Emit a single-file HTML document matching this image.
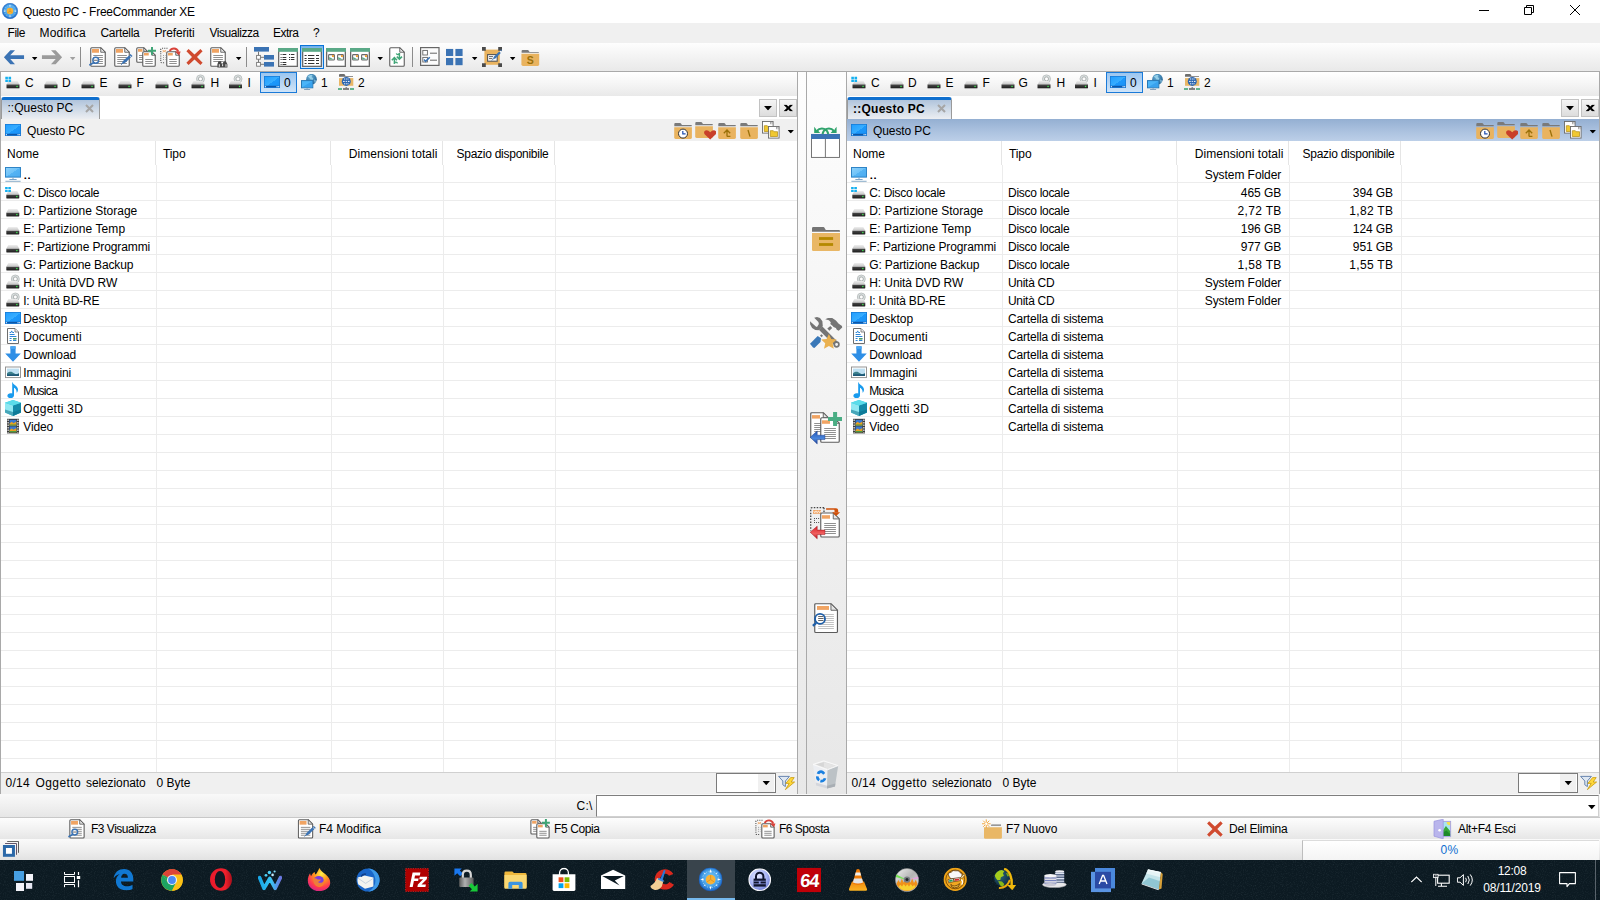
<!DOCTYPE html>
<html><head><meta charset="utf-8"><title>Questo PC - FreeCommander XE</title>
<style>
html,body{margin:0;padding:0;background:#f0f0f0;overflow:hidden;}
body{width:1600px;height:900px;position:relative;overflow:hidden;font-family:"Liberation Sans",sans-serif;font-size:12px;color:#000}
div,span.t,span.b,svg.a{position:absolute;}
span.t,span.b{white-space:pre;}
span.b{font-weight:bold}
</style></head>
<body>
<svg width="0" height="0" style="position:absolute"><defs>
<linearGradient id="gdt" x1="0" y1="0" x2="0" y2="1"><stop offset="0" stop-color="#eeeeee"/><stop offset="1" stop-color="#c2c2c2"/></linearGradient><linearGradient id="gdb" x1="0" y1="0" x2="0" y2="1"><stop offset="0" stop-color="#4a4a4a"/><stop offset="1" stop-color="#1c1c1c"/></linearGradient>
<symbol id="i-back" viewBox="0 0 21 15"><path d="M6.9 0.2L0.4 7.2 6.9 14.2H11.5L6.76 9.1H20.6V5.3H6.76L11.5 0.2z" fill="#3b73b4"/></symbol>
<symbol id="i-fwd" viewBox="0 0 21 15"><path d="M14.1 0.2L20.6 7.2 14.1 14.2H9.5L14.24 9.1H0.4V5.3H14.24L9.5 0.2z" fill="#9b9b9b"/></symbol>
<symbol id="i-dd" viewBox="0 0 7 4"><path d="M0 0h7L3.5 4z" fill="#000"/></symbol>
<symbol id="i-ddg" viewBox="0 0 7 4"><path d="M0 0h7L3.5 4z" fill="#a0a0a0"/></symbol>
<symbol id="i-tview" viewBox="0 0 18 21"><path d="M3.75 0.75H12.75L17.25 5.25V18.25Q17.25 19.25 16.25 19.25H3.75Q2.75 19.25 2.75 18.25V1.75Q2.75 0.75 3.75 0.75z" fill="#fff" stroke="#5c5c5c" stroke-width="1.1" stroke-linejoin="round"/><path d="M12.75 0.75V5.25H17.25z" fill="#e4e4e4" stroke="#5c5c5c" stroke-width="0.88" stroke-linejoin="round"/><rect x="4" y="2" width="7.0" height="3.75" fill="#f0a463"/><path d="M5.25 8.5H14.9" stroke="#747474" stroke-width="0.8"/><path d="M5.25 10.5H14.9" stroke="#747474" stroke-width="0.8"/><path d="M5.25 12.5H14.9" stroke="#747474" stroke-width="0.8"/><path d="M5.25 14.5H14.9" stroke="#747474" stroke-width="0.8"/><path d="M5.25 16.5H14.9" stroke="#747474" stroke-width="0.8"/><circle cx="7.75" cy="13.25" r="2.9" fill="#fff" stroke="#3b73b4" stroke-width="1.5"/><path d="M5.5 15.7L1.9 17.8" stroke="#3b73b4" stroke-width="1.7" stroke-linecap="round"/><path d="M5.7 13.25h4.100" stroke="#5a5a5a" stroke-width="0.9"/></symbol>
<symbol id="i-tedit" viewBox="0 0 19 21"><path d="M1.75 0.75H10.75L15.25 5.25V18.25Q15.25 19.25 14.25 19.25H1.75Q0.75 19.25 0.75 18.25V1.75Q0.75 0.75 1.75 0.75z" fill="#fff" stroke="#5c5c5c" stroke-width="1.1" stroke-linejoin="round"/><path d="M10.75 0.75V5.25H15.25z" fill="#e4e4e4" stroke="#5c5c5c" stroke-width="0.88" stroke-linejoin="round"/><rect x="2" y="2" width="7.0" height="3.75" fill="#f0a463"/><path d="M3.25 8.5H12.9" stroke="#747474" stroke-width="0.8"/><path d="M3.25 10.5H12.9" stroke="#747474" stroke-width="0.8"/><path d="M3.25 12.5H12.9" stroke="#747474" stroke-width="0.8"/><path d="M3.25 14.5H12.9" stroke="#747474" stroke-width="0.8"/><path d="M3.25 16.5H12.9" stroke="#747474" stroke-width="0.8"/><path d="M7.600 16.900l1.400-2.800 6-5.600 1.900 2-6 5.600z" fill="#3b73b4"/><path d="M7 17.700l1.300-1.200" stroke="#3b73b4" stroke-width="1"/><path d="M15.400 7.900l1.100-0.900 2 2.100-1.100 0.900z" fill="#3b73b4"/></symbol>
<symbol id="i-tcopy" viewBox="0 0 21 21"><path d="M1.75 0.75H7.75L11.25 4.25V14.25Q11.25 15.25 10.25 15.25H1.75Q0.75 15.25 0.75 14.25V1.75Q0.75 0.75 1.75 0.75z" fill="#fff" stroke="#5c5c5c" stroke-width="1.1" stroke-linejoin="round"/><path d="M7.75 0.75V4.25H11.25z" fill="#e4e4e4" stroke="#5c5c5c" stroke-width="0.88" stroke-linejoin="round"/><rect x="2" y="2" width="4.5" height="2.75" fill="#f0a463"/><path d="M3 8.5H9" stroke="#747474" stroke-width="0.8"/><path d="M3 10.5H9" stroke="#747474" stroke-width="0.8"/><path d="M3 12.5H9" stroke="#747474" stroke-width="0.8"/><path d="M7.75 4.75H15.75L19.25 8.25V18.25Q19.25 19.25 18.25 19.25H7.75Q6.75 19.25 6.75 18.25V5.75Q6.75 4.75 7.75 4.75z" fill="#fff" stroke="#5c5c5c" stroke-width="1.1" stroke-linejoin="round"/><path d="M15.75 4.75V8.25H19.25z" fill="#e4e4e4" stroke="#5c5c5c" stroke-width="0.88" stroke-linejoin="round"/><rect x="8" y="6" width="4.75" height="2.5" fill="#f0a463"/><path d="M9.25 12.5H16.75" stroke="#747474" stroke-width="0.8"/><path d="M9.25 14.5H16.75" stroke="#747474" stroke-width="0.8"/><path d="M9.25 16.5H16.75" stroke="#747474" stroke-width="0.8"/><path d="M16 0v7.750M12 3.750h8" stroke="#3fa576" stroke-width="2"/></symbol>
<symbol id="i-tmove" viewBox="0 0 21 21"><path d="M7.500 1.250H2q-1.250 0-1.250 1.250V14.500q0 1.250 1.250 1.250H5" fill="none" stroke="#555" stroke-width="1.100" stroke-dasharray="1.100 1.100"/><path d="M2.500 3.200l3.600 2M2.500 5.200l3.600-2" stroke="#f0a463" stroke-width="0.800"/><path d="M3 8.500h2.500M3 10.500h2.500M3 12.500h2.500" stroke="#888" stroke-width="0.800" stroke-dasharray="1 1"/><path d="M7.75 4.75H15.75L19.25 8.25V18.25Q19.25 19.25 18.25 19.25H7.75Q6.75 19.25 6.75 18.25V5.75Q6.75 4.75 7.75 4.75z" fill="#fff" stroke="#5c5c5c" stroke-width="1.1" stroke-linejoin="round"/><path d="M15.75 4.75V8.25H19.25z" fill="#e4e4e4" stroke="#5c5c5c" stroke-width="0.88" stroke-linejoin="round"/><rect x="8" y="6" width="4.75" height="2.5" fill="#f0a463"/><path d="M9.25 12.5H16.75" stroke="#747474" stroke-width="0.8"/><path d="M9.25 14.5H16.75" stroke="#747474" stroke-width="0.8"/><path d="M9.25 16.5H16.75" stroke="#747474" stroke-width="0.8"/><path d="M9.600 4C11.600 0.600 16.600 0.400 18.400 4.600" fill="none" stroke="#d9433b" stroke-width="1.900"/><path d="M15 4.600h5.600l-1.300 3.800z" fill="#d9433b"/></symbol>
<symbol id="i-tdel" viewBox="0 0 17 17"><path d="M2.6 0.4L8.5 5.9 14.4 0.4 16.6 2.8 11 8.5l5.6 5.7-2.2 2.4L8.5 11 2.6 16.6 0.4 14.2 6 8.5 0.4 2.8z" fill="#d04a2f"/></symbol>
<symbol id="i-tsearch" viewBox="0 0 19 21"><path d="M1.75 0.75H10.75L15.25 5.25V18.25Q15.25 19.25 14.25 19.25H1.75Q0.75 19.25 0.75 18.25V1.75Q0.75 0.75 1.75 0.75z" fill="#fff" stroke="#5c5c5c" stroke-width="1.1" stroke-linejoin="round"/><path d="M10.75 0.75V5.25H15.25z" fill="#e4e4e4" stroke="#5c5c5c" stroke-width="0.88" stroke-linejoin="round"/><rect x="2" y="2" width="7.0" height="3.75" fill="#f0a463"/><path d="M3.25 8.5H12.9" stroke="#747474" stroke-width="0.8"/><path d="M3.25 10.5H12.9" stroke="#747474" stroke-width="0.8"/><path d="M3.25 12.5H12.9" stroke="#747474" stroke-width="0.8"/><path d="M3.25 14.5H12.9" stroke="#747474" stroke-width="0.8"/><path d="M7.400 20.600v-3.400l1.100-3h2.500l0.500 2.200h1.400l0.500-2.200h2.500l1.500 3v3.400z" fill="#474747"/><path d="M9.300 17.200v2.600M16 17.200v2.600M12.600 17.200v2" stroke="#fff" stroke-width="0.900"/></symbol>
<symbol id="i-ttree" viewBox="0 0 20 20"><rect x="0" y="0" width="15" height="4.6" fill="#3b73b4"/><rect x="10" y="8" width="10" height="4.6" fill="#3b73b4"/><rect x="10" y="15" width="10" height="4.6" fill="#3b73b4"/><path d="M4.5 4.6V17.3M4.5 10.3H10M4.5 17.3H10" stroke="#777" stroke-width="1" fill="none"/><rect x="2.6" y="8.4" width="3.8" height="3.8" fill="#fff" stroke="#777" stroke-width="0.9"/><rect x="2.6" y="15.4" width="3.8" height="3.8" fill="#fff" stroke="#777" stroke-width="0.9"/></symbol>
<symbol id="i-tlist" viewBox="0 0 20 19"><rect x="0.65" y="0.65" width="18.7" height="17.7" fill="#fff" stroke="#6a6a6a" stroke-width="1.3"/><rect x="0" y="0" width="20" height="3.8" fill="#5aa987"/><path d="M4.5 6.5h3.8M4.5 9.5h3.8M4.5 11.5h3.8M4.5 14.5h3.8M4.5 16.5h3.8M12.8 6.5h3.6M12.8 9.5h3.6M12.8 11.5h3.6" stroke="#333" stroke-width="1"/><path d="M2.6 6.5h1M2.6 9.5h1M2.6 11.5h1M2.6 14.5h1M2.6 16.5h1M11 6.5h1M11 9.5h1M11 11.5h1" stroke="#333" stroke-width="1"/></symbol>
<symbol id="i-tdetail" viewBox="0 0 20 19"><rect x="0.65" y="0.65" width="18.7" height="17.7" fill="#fff" stroke="#6a6a6a" stroke-width="1.3"/><rect x="0" y="0" width="20" height="3.8" fill="#5aa987"/><path d="M2.6 7.5h2M6 7.5h6.4M14 7.5h3M2.6 10.5h2M6 10.5h6.4M14 10.5h3M2.6 12.5h2M6 12.5h6.4M14 12.5h3M2.6 15.5h2M6 15.5h6.4M14 15.5h3" stroke="#333" stroke-width="1"/></symbol>
<symbol id="i-tthumb" viewBox="0 0 20 19"><rect x="0.65" y="0.65" width="18.7" height="17.7" fill="#fff" stroke="#6a6a6a" stroke-width="1.3"/><rect x="0" y="0" width="20" height="3.8" fill="#5aa987"/><rect x="2.6" y="6.6" width="5.8" height="5.4" rx="0.8" fill="#fff" stroke="#6a6a6a" stroke-width="1.1"/><path d="M3.2 9l4.6 2.4h-4.6z" fill="#5aa987"/><rect x="6.0" y="7.1" width="1.9" height="1.9" fill="#f0a030"/><rect x="11.6" y="6.6" width="5.8" height="5.4" rx="0.8" fill="#fff" stroke="#6a6a6a" stroke-width="1.1"/><path d="M12.2 9l4.6 2.4h-4.6z" fill="#5aa987"/><rect x="15.0" y="7.1" width="1.9" height="1.9" fill="#f0a030"/></symbol>
<symbol id="i-trefresh" viewBox="0 0 17 21"><path d="M1.75 0.75H10.75L15.25 5.25V18.25Q15.25 19.25 14.25 19.25H1.75Q0.75 19.25 0.75 18.25V1.75Q0.75 0.75 1.75 0.75z" fill="#fff" stroke="#5c5c5c" stroke-width="1.1" stroke-linejoin="round"/><path d="M10.75 0.75V5.25H15.25z" fill="#e4e4e4" stroke="#5c5c5c" stroke-width="0.88" stroke-linejoin="round"/><path d="M5.400 16.800v-5.600M2.800 13.200l2.600-2.600 2.600 2.600" fill="none" stroke="#3fa576" stroke-width="1.500"/><path d="M5.400 16.800c0-2 2.600-2.200 3-0.400" fill="none" stroke="#3fa576" stroke-width="1.400"/><path d="M10.400 6v5.600M7.800 9.600l2.600 2.600 2.600-2.600" fill="none" stroke="#3fa576" stroke-width="1.500"/><path d="M10.400 6c0 2-2.600 2.200-3 0.400" fill="none" stroke="#3fa576" stroke-width="1.400"/></symbol>
<symbol id="i-tcheck" viewBox="0 0 20 19"><rect x="0.6" y="0.6" width="18.4" height="17.8" fill="#fcfcfc" stroke="#666" stroke-width="1.2"/><rect x="2.8" y="3.4" width="4.6" height="4.6" fill="#fff" stroke="#666" stroke-width="0.9"/><rect x="2.8" y="10.4" width="4.6" height="4.6" fill="#fff" stroke="#666" stroke-width="0.9"/><path d="M10 6.2h7M10 13.2h7" stroke="#666" stroke-width="1"/><path d="M4 12.6l1.6 1.8 4.2-4.2" fill="none" stroke="#3b73b4" stroke-width="1.5"/></symbol>
<symbol id="i-tgrid" viewBox="0 0 17 17"><path d="M0 0h7.2v7.2H0zM9.4 0h7.2v7.2H9.4zM0 9.4h7.2v7.2H0zM9.4 9.4h7.2v7.2H9.4z" fill="#3b73b4"/></symbol>
<symbol id="i-tselect" viewBox="0 0 21 21"><rect x="2.4" y="2.6" width="15.4" height="15.2" fill="#e9b35f"/><path d="M0 0h3.8v3.8H0zM16.2 0h3.8v3.8h-3.8zM0 16.2h3.8v3.8H0zM16.2 16.2h3.8v3.8h-3.8z" fill="#4a4a4a"/><rect x="5.6" y="7.6" width="9.6" height="6.6" fill="#fff" stroke="#555" stroke-width="1.1"/><path d="M7 9.6h4M7 11.6h3.4" stroke="#555" stroke-width="0.9"/><path d="M11 12.2l0.8-2.4 5.4-5.4 1.6 1.6-5.4 5.4z" fill="#3b73b4"/><path d="M18 3l1.8-0.4-0.4 1.8z" fill="#3b73b4"/><path d="M9.8 13.4l1.2-1.2" stroke="#3b73b4" stroke-width="1"/></symbol>
<symbol id="i-tsfolder" viewBox="0 0 19 17"><path d="M0.6 2.6V1.4Q0.6 0.4 1.6 0.4H6.6Q7.4 0.4 7.8 1.2L8.6 2.4H17.8V3.2H0.6z" fill="#7a7a7a"/><path d="M0.4 4.2H18.2V14.8Q18.2 16.4 16.6 16.4H2Q0.4 16.4 0.4 14.8z" fill="#e9b35f"/><text x="9.3" y="14.2" font-family="Liberation Sans" font-size="10.5" font-weight="bold" fill="#9a7008" text-anchor="middle">S</text></symbol>
<symbol id="i-drv" viewBox="0 0 16 17"><path d="M4 8.6h9l2 3.700H2z" fill="url(#gdt)"/><path d="M2 12.2h13v3.100a0.600 0.600 0 0 1-0.600 0.600H2.600a0.600 0.600 0 0 1-0.600-0.600z" fill="url(#gdb)"/><rect x="11.900" y="13.399999999999999" width="1.300" height="1.300" fill="#3cf050"/><path d="M2.200 16.2h12.600" stroke="#9a9a9a" stroke-width="0.600" stroke-opacity=".6"/></symbol>
<symbol id="i-drvc" viewBox="0 0 16 17"><path d="M4 8.6h9l2 3.700H2z" fill="url(#gdt)"/><path d="M2 12.2h13v3.100a0.600 0.600 0 0 1-0.600 0.600H2.600a0.600 0.600 0 0 1-0.600-0.600z" fill="url(#gdb)"/><rect x="11.900" y="13.399999999999999" width="1.300" height="1.300" fill="#3cf050"/><path d="M2.200 16.2h12.600" stroke="#9a9a9a" stroke-width="0.600" stroke-opacity=".6"/><path d="M0.800 4.400h2.600v2.400H0.800zM4 4.400H6.600v2.400H4zM0.800 7.400h2.600v2.200H0.800zM4 7.400H6.600v2.200H4z" fill="#14b0f0"/></symbol>
<symbol id="i-drvcd" viewBox="0 0 16 17"><circle cx="11" cy="6.500" r="4" fill="#dde4e4" stroke="#b4b8b8" stroke-width="0.800"/><circle cx="11" cy="6.500" r="2.100" fill="#f4f4f4" stroke="#a4a8a8" stroke-width="0.900"/><circle cx="11" cy="6.500" r="1" fill="#fff"/><path d="M4 8.6h9l2 3.700H2z" fill="url(#gdt)"/><path d="M2 12.2h13v3.100a0.600 0.600 0 0 1-0.600 0.600H2.600a0.600 0.600 0 0 1-0.600-0.600z" fill="url(#gdb)"/><rect x="11.900" y="13.399999999999999" width="1.300" height="1.300" fill="#3cf050"/><path d="M2.200 16.2h12.600" stroke="#9a9a9a" stroke-width="0.600" stroke-opacity=".6"/></symbol>
<symbol id="i-desk" viewBox="0 0 16 12"><defs><linearGradient id="gds" x1="0" y1="0" x2="1" y2="1"><stop offset="0" stop-color="#1f9cff"/><stop offset=".52" stop-color="#38aeff"/><stop offset=".52" stop-color="#1c98fb"/><stop offset="1" stop-color="#1a90f4"/></linearGradient></defs><rect width="16" height="11.800" fill="url(#gds)"/><path d="M0 0.400h16M0.400 0v11.800M15.600 0v11.800" stroke="#1678d2" stroke-width="0.800"/><rect x="0" y="9.600" width="16" height="2.200" fill="#1470cc"/><path d="M2.200 10.700h9.800" stroke="#0c4f9c" stroke-width="0.900"/><path d="M0.900 10.700h1M12.600 10.700h1M14.200 10.700h1" stroke="#fff" stroke-width="1"/></symbol>
<symbol id="i-pc" viewBox="0 0 16 15"><defs><linearGradient id="gpc" x1="0" y1="0" x2="1" y2="1"><stop offset="0" stop-color="#8fd2fb"/><stop offset=".5" stop-color="#6ec2f8"/><stop offset=".5" stop-color="#55b4f4"/><stop offset="1" stop-color="#4aaaf0"/></linearGradient></defs><rect x="0.500" y="0.500" width="15" height="9.600" fill="url(#gpc)" stroke="#2f84c6" stroke-width="1"/><path d="M8 10.600v1.600M4.400 12.500h7.200" stroke="#7ba4c8" stroke-width="1"/><path d="M0.400 14.300h15.200" stroke="#8fb0cc" stroke-width="1.100"/></symbol>
<symbol id="i-docs" viewBox="0 0 16 16"><path d="M2.500 0.500h7.500l3.500 3.500v11.500H2.500z" fill="#fff" stroke="#6e6e6e" stroke-width="1"/><path d="M10 0.700v3.300h3.300" fill="#eee" stroke="#6e6e6e" stroke-width="0.800"/><path d="M4.600 4.500h1.400l0.700-1.600 0.700 1.600h1.600M4.600 6.500h5M4.600 8.500h6.800M4.600 10.500h2M8 10.500h3.400M4.600 12.500h2M8 12.500h3.400" fill="none" stroke="#2f86d6" stroke-width="1"/><path d="M8 10h3.400v1.600H8z" fill="#4a9a6a"/></symbol>
<symbol id="i-down" viewBox="0 0 16 16"><path d="M5.400 0.300h5.200v7.300h5.200L8 15.800 0.200 7.600h5.200z" fill="#2f8fe6"/><path d="M5.400 0.300h5.200v2.600H5.400z" fill="#4aa6f2"/></symbol>
<symbol id="i-pics" viewBox="0 0 16 16"><rect x="0.5" y="3" width="15" height="10.6" fill="#fff" stroke="#8c8c8c" stroke-width="0.9"/><rect x="2" y="4.6" width="12" height="7.4" fill="#bfe0f2"/><path d="M2 9.2c3-2.4 5-1.6 7 0s3.4 1 5-0.2V12H2z" fill="#3c7f8c"/><path d="M2 10.6c4-1 8 0.2 12-0.6V12H2z" fill="#1e5a78"/></symbol>
<symbol id="i-music" viewBox="0 0 16 16"><path d="M7.600 0.200c0.400 2.600 5.400 3.400 5.400 7.400 0 1.400-0.600 2.600-1.400 3.400 0.400-3-1.400-4.800-2.600-5.200v7.400c0 1.800-1.800 3-3.600 3s-3-1-3-2.400 1.400-2.600 3.200-2.600c0.800 0 1.200 0.100 1.600 0.400V0.200z" fill="#199bee"/></symbol>
<symbol id="i-obj3d" viewBox="0 0 16 16"><path d="M8 0l8 2.800v9.800l-8 3.400-8-3.400V2.800z" fill="#35c8dc"/><path d="M0 2.800l8 2.800v10.400L0 12.600z" fill="#8fe8f2"/><path d="M8 5.600l8-2.800v9.800l-8 3.400z" fill="#138aa8"/><path d="M0 2.800L8 0l8 2.800-8 2.800z" fill="#5adcea"/><path d="M0 9.400l8 2.600 8-2.600v3.200l-8 3.400-8-3.400z" fill="#0c6f8a" fill-opacity=".55"/></symbol>
<symbol id="i-video" viewBox="0 0 16 16"><rect x="2" y="0.8" width="12" height="14.6" fill="#3a3a3a"/><path d="M3.1 1.6v13.2M12.9 1.6v13.2" stroke="#fff" stroke-width="1.1" stroke-dasharray="1.3 1.2"/><rect x="4.6" y="1.8" width="6.8" height="5.8" fill="#3a78d0"/><rect x="4.6" y="8.4" width="6.8" height="5.8" fill="#3a78d0"/><path d="M4.6 5.4l2-1.6 2 1.400 2.800-1.800v4.200H4.600zM4.600 12l2-1.600 2 1.400 2.800-1.800v4.200H4.600z" fill="#e8a020"/><path d="M4.600 6.400h6.800v1.200H4.600zM4.600 13h6.800v1.200H4.600z" fill="#4a9a40"/></symbol>
<symbol id="i-net1" viewBox="0 0 17 16"><defs><radialGradient id="gn1" cx=".4" cy=".3" r=".75"><stop offset="0" stop-color="#6ab4dc"/><stop offset="1" stop-color="#1c5a8c"/></radialGradient></defs><circle cx="11" cy="5.200" r="5.300" fill="url(#gn1)"/><path d="M7.200 2.600c1.600-1.400 3.400-1.800 4.800-1.400l-1 1.800 1.800 1.200-0.400 1.600-2.400-0.400-1.200-1.600z" fill="#a8dcf0" fill-opacity=".75"/><path d="M13.400 5.600l1.800 0.400 0.400 2-1.400 1.600z" fill="#a8dcf0" fill-opacity=".6"/><rect x="1" y="6.600" width="11.300" height="7.200" fill="#4ab4f8" stroke="#2878b4" stroke-width="1"/><path d="M1.600 13.200L11.700 7.200v6z" fill="#38a2ee"/><path d="M6.600 14.200v1M3.600 15.500h6" stroke="#7a9ab8" stroke-width="0.900"/></symbol>
<symbol id="i-net2" viewBox="0 0 17 16"><path d="M1.500 2V1Q1.500 0 2.500 0H6.500Q7 0 7.300 0.500L8 2H15.500V2.700H1.500z" fill="#6e6e6e"/><rect x="1.500" y="4.100" width="14.300" height="7.700" fill="#e9b766"/><circle cx="8.800" cy="7.400" r="4.500" fill="#2c66b0"/><path d="M6.600 5h1M8.300 5h1M10 5h1M5.600 7.400h1.600M8.200 7.400h1.200M10.400 7.400h1.600M6.600 9.800h1M8.300 9.800h1M10 9.800h1" stroke="#fff" stroke-width="1"/><rect x="0.500" y="14.200" width="4" height="1.600" fill="#3fa576"/><rect x="12.500" y="14.200" width="4" height="1.600" fill="#3fa576"/><rect x="5.500" y="14.200" width="6" height="1.600" fill="#666"/><rect x="8" y="13.300" width="1.600" height="1" fill="#666"/></symbol>
<symbol id="i-fhist" viewBox="0 0 18 16"><path d="M0.300 3.200V1Q0.300 0 1.300 0H6Q6.800 0 7.200 0.800L7.900 2.100H17.7V3.200z" fill="#7a7a7a"/><path d="M0.200 4.300H17.9V14.600Q17.9 16 16.5 16H1.600Q0.200 16 0.200 14.600z" fill="#e9b35f"/><circle cx="9" cy="10.600" r="4.500" fill="#fff" stroke="#333" stroke-width="1"/><path d="M8.800 8v2.800h2.800" fill="none" stroke="#1f4fb0" stroke-width="1.200"/></symbol>
<symbol id="i-ffav" viewBox="0 0 21 18"><path d="M0.300 3.200V1Q0.300 0 1.300 0H6Q6.800 0 7.200 0.800L7.900 2.100H17.7V3.200z" fill="#7a7a7a"/><path d="M0.200 4.300H17.9V14.600Q17.9 16 16.5 16H1.600Q0.200 16 0.200 14.600z" fill="#e9b35f"/><path d="M15.200 17.600L9.600 12.200Q8.200 9.600 10.400 8.400Q12.800 7.400 15.200 10.200Q17.600 7.400 20 8.400Q22.200 9.600 20.800 12.200z" fill="#c8402a"/></symbol>
<symbol id="i-fup" viewBox="0 0 18 16"><path d="M0.300 3.200V1Q0.300 0 1.300 0H6Q6.800 0 7.200 0.800L7.900 2.100H17.7V3.200z" fill="#7a7a7a"/><path d="M0.200 4.300H17.9V14.600Q17.9 16 16.5 16H1.600Q0.200 16 0.200 14.600z" fill="#e9b35f"/><path d="M9 13.400V7.600M5.800 10.200L9 7l3.200 3.200M9 13.400h3.400" fill="none" stroke="#9a7008" stroke-width="1.300"/></symbol>
<symbol id="i-froot" viewBox="0 0 18 16"><path d="M0.300 3.200V1Q0.300 0 1.300 0H6Q6.800 0 7.200 0.800L7.900 2.100H17.7V3.200z" fill="#7a7a7a"/><path d="M0.200 4.300H17.9V14.600Q17.9 16 16.5 16H1.600Q0.200 16 0.200 14.600z" fill="#e9b35f"/><path d="M8 7l2 6.600" stroke="#9a7008" stroke-width="1.300"/></symbol>
<symbol id="i-fcopy2" viewBox="0 0 18 18"><rect x="0.5" y="0.5" width="10.600" height="11.600" fill="#fff" stroke="#6a6a6a" stroke-width="0.900"/><rect x="8.7" y="1.3" width="1.600" height="1.600" fill="#fff" stroke="#888" stroke-width="0.500"/><path d="M2.3 4.7h3l0.800 1h3.400v4.800h-7.200z" fill="#f0c830" stroke="#b08a10" stroke-width="0.700"/><rect x="6.5" y="5.5" width="10.600" height="11.600" fill="#fff" stroke="#6a6a6a" stroke-width="0.900"/><rect x="14.7" y="6.3" width="1.600" height="1.600" fill="#fff" stroke="#888" stroke-width="0.500"/><path d="M8.3 9.7h3l0.800 1h3.400v4.800h-7.200z" fill="#f0c830" stroke="#b08a10" stroke-width="0.700"/></symbol>
<symbol id="i-xbtn" viewBox="0 0 10 7"><path d="M0.200 0.200H3.200L5 2.100 6.800 0.200H9.800L6.500 3.500 9.800 6.800H6.800L5 4.900 3.200 6.800H0.200L3.500 3.500z" fill="#000"/></symbol>
<symbol id="i-xtab" viewBox="0 0 9 9"><path d="M1 1l7 7M8 1l-7 7" stroke="#a6a6a6" stroke-width="2.100"/></symbol>
<symbol id="i-filter" viewBox="0 0 18 16"><path d="M0.600 1.400h10.800L7.400 6v5.600L4.800 9.800V6z" fill="#dfe8f2" stroke="#5a7aa8" stroke-width="0.900"/><path d="M12.600 2.600L7.800 8.400h3.400L7.400 14.600 16.600 7h-3.400l3-4.400z" fill="#ffd83a" stroke="#c89a10" stroke-width="0.800"/></symbol>
<symbol id="i-app" viewBox="0 0 16 16"><defs><radialGradient id="gapp" cx=".5" cy=".45" r=".55"><stop offset="0" stop-color="#7ccaf6"/><stop offset=".6" stop-color="#48a4ea"/><stop offset="1" stop-color="#1c68c8"/></radialGradient></defs><circle cx="8" cy="8" r="7.700" fill="url(#gapp)" stroke="#1c5cb8" stroke-width="0.500"/><circle cx="8" cy="8" r="5.500" fill="none" stroke="#cfe8fb" stroke-width="0.600" stroke-dasharray="0.800 1.200"/><path d="M8 1.200l0.700 2.200h-1.400zM8 14.800l0.700-2.200h-1.400zM1.200 8l2.200-0.700v1.400zM14.800 8l-2.200-0.700v1.400z" fill="#fff"/><circle cx="8" cy="8.100" r="3.300" fill="#f8b238"/><path d="M8 5.200v3l-2.400 1.500M8 8.200l2.400 1.500" fill="none" stroke="#e09418" stroke-width="0.700"/></symbol>
<symbol id="i-swap" viewBox="0 0 31 33"><rect x="1.450" y="8.400" width="28" height="23" fill="#fff" stroke="#666" stroke-width="0.900"/><rect x="1" y="7.900" width="28.900" height="5" rx="0.600" fill="#3b73b4"/><path d="M15.400 12.900V31.400" stroke="#666" stroke-width="0.900"/><path d="M18.300 8C17.600 3.400 11.600 -0.200 6.400 5.200" fill="none" stroke="#2fa36c" stroke-width="2"/><path d="M12.500 8C13.200 3.400 19.200 -0.200 24.400 5.200" fill="none" stroke="#2fa36c" stroke-width="2"/><path d="M4.200 0.800V6.900H10.200L8.400 5 6.600 4.800 6 3z" fill="#2fa36c"/><path d="M26.600 0.800V6.900H20.600L22.400 5 24.200 4.800 24.800 3z" fill="#2fa36c"/></symbol>
<symbol id="i-mfolder" viewBox="0 0 28 24"><path d="M0 4.800V1.400Q0 0.100 1.300 0.100H11.400Q12.200 0.100 12.600 0.900L13.800 3H27Q28 3 28 4v0.800z" fill="#747474"/><path d="M0 6H28V22.800Q28 24 26.800 24H1.200Q0 24 0 22.800z" fill="#e9b766"/><rect x="7" y="10.100" width="14.100" height="2.800" fill="#b58900"/><rect x="7" y="16.100" width="14.100" height="2.800" fill="#b58900"/></symbol>
<symbol id="i-tools" viewBox="0 0 34 34"><path d="M16.200 3.200L19 2.100H23.200L26.900 4.400 29.700 7.700 33 10 33.200 11.400 29.700 14.700 27.800 13.800 26.900 11.900 24.600 11 23.200 9.600 21.300 8.100 21.800 6.300 19.900 4.200z" fill="#757575"/><path d="M18.300 12.400L21.300 10 23.200 11.900 20.400 14.700z" fill="#757575"/><path d="M11 19.600l1.400-1.400 1.600 1.600-1.400 1.400z" fill="#757575"/><path d="M1 27.800L8.700 20.100 12 22.200 11.500 25.900 5.400 32 4 31.500z" fill="#3a78b8"/><path d="M11.500 12L28 28.500" stroke="#757575" stroke-width="4.600"/><path d="M5.200 1.800L8 0.900 11 2.100 13.400 5.300 13.600 8.100 13.800 10 9.600 14.200 6.300 14 3.100 11.900 1.200 8.600 1 5.300 6.800 10.500 8 11 9.900 8.100 9.400 6z" fill="#757575"/><circle cx="27.600" cy="28.500" r="2.300" fill="#f2f2f2" stroke="#757575" stroke-width="1.700"/><path d="M19.900 18l2.300 5 5.500 0.600-4.100 3.700 1.200 5.400-4.900-2.800-4.900 2.800 1.200-5.400-4.100-3.700 5.500-0.600z" fill="#eab150"/></symbol>
<symbol id="i-mcopy" viewBox="0 0 33 33"><path d="M1.75 0.75H13.25L18.25 5.75V24.75Q18.25 25.75 17.25 25.75H1.75Q0.75 25.75 0.75 24.75V1.75Q0.75 0.75 1.75 0.75z" fill="#fff" stroke="#5c5c5c" stroke-width="1.15" stroke-linejoin="round"/><path d="M13.25 0.75V5.75H18.25z" fill="#e4e4e4" stroke="#5c5c5c" stroke-width="0.92" stroke-linejoin="round"/><rect x="2" y="3.1" width="8" height="3.5" fill="#f0a463"/><path d="M4.2 11.5H12" stroke="#747474" stroke-width="0.8"/><path d="M4.2 13.5H12" stroke="#747474" stroke-width="0.8"/><path d="M4.2 15.5H12" stroke="#747474" stroke-width="0.8"/><path d="M4.2 17.5H12" stroke="#747474" stroke-width="0.8"/><path d="M4.2 19.5H12" stroke="#747474" stroke-width="0.8"/><path d="M11.75 5.75H23.75L29.25 11.25V29.25Q29.25 30.25 28.25 30.25H11.75Q10.75 30.25 10.75 29.25V6.75Q10.75 5.75 11.75 5.75z" fill="#fff" stroke="#5c5c5c" stroke-width="1.15" stroke-linejoin="round"/><path d="M23.75 5.75V11.25H29.25z" fill="#e4e4e4" stroke="#5c5c5c" stroke-width="0.92" stroke-linejoin="round"/><rect x="12" y="8.3" width="8" height="3.5" fill="#f0a463"/><path d="M14.2 16.5H25.9" stroke="#747474" stroke-width="0.8"/><path d="M14.2 18.5H25.9" stroke="#747474" stroke-width="0.8"/><path d="M14.2 20.5H25.9" stroke="#747474" stroke-width="0.8"/><path d="M14.2 22.5H25.9" stroke="#747474" stroke-width="0.8"/><path d="M14.2 24.5H25.9" stroke="#747474" stroke-width="0.8"/><path d="M14.2 26.5H25.9" stroke="#747474" stroke-width="0.8"/><path d="M25.100 0.100v13.800M18 7h14" stroke="#4aad84" stroke-width="4"/><defs><linearGradient id="gba" x1="0" y1="0" x2="0" y2="1"><stop offset="0" stop-color="#2358b8"/><stop offset=".6" stop-color="#4a86dc"/><stop offset="1" stop-color="#1c3f94"/></linearGradient></defs><path d="M0.200 25.300L7.200 19V23.200H14.900V27.600H7.200V31.900z" fill="url(#gba)" stroke="#1d3f8f" stroke-width="0.500"/></symbol>
<symbol id="i-mmove" viewBox="0 0 33 33"><path d="M14 0.700H2.200Q0.700 0.700 0.700 2.200V23.500" fill="none" stroke="#444" stroke-width="1.300" stroke-dasharray="1.500 1.400"/><path d="M14 0.700V5" stroke="#444" stroke-width="1.300" stroke-dasharray="1.500 1.400"/><rect x="3" y="3" width="8" height="3.800" fill="#f0a463"/><path d="M3.600 3.800l1.200 2 1.200-2 1.200 2 1.200-2 1.200 2 1.200-2" fill="none" stroke="#fff" stroke-width="0.700"/><path d="M4 11.500h1M6 11.500h1M8.100 11.500h1M4 13.400h1M4 15.500h1M6 15.500h1M8.100 15.500h1" stroke="#555" stroke-width="1"/><path d="M11.75 5.95H23.25L29.25 11.95V29.05Q29.25 30.05 28.25 30.05H11.75Q10.75 30.05 10.75 29.05V6.95Q10.75 5.95 11.75 5.95z" fill="#fff" stroke="#5c5c5c" stroke-width="1.1" stroke-linejoin="round"/><path d="M23.25 5.95V11.95H29.25z" fill="#e4e4e4" stroke="#5c5c5c" stroke-width="0.88" stroke-linejoin="round"/><rect x="12" y="8.2" width="8" height="3.5" fill="#f0a463"/><path d="M14.2 16.5H25.9" stroke="#747474" stroke-width="0.8"/><path d="M14.2 18.5H25.9" stroke="#747474" stroke-width="0.8"/><path d="M14.2 20.5H25.9" stroke="#747474" stroke-width="0.8"/><path d="M14.2 22.5H25.9" stroke="#747474" stroke-width="0.8"/><path d="M14.2 24.5H25.9" stroke="#747474" stroke-width="0.8"/><path d="M14.2 26.5H25.9" stroke="#747474" stroke-width="0.8"/><path d="M16.100 1.200H26Q28.200 1.200 28.200 3.400V5.400H24.500V3.400Q24.500 2.800 24 2.800H16.100z" fill="#d0500a"/><path d="M22.200 5.200H30.100L26.100 9z" fill="#d0500a"/><defs><linearGradient id="gra" x1="0" y1="0" x2="0" y2="1"><stop offset="0" stop-color="#d82028"/><stop offset=".6" stop-color="#f06060"/><stop offset="1" stop-color="#b81018"/></linearGradient></defs><path d="M0.200 25.200L7.200 19.200V23.100H14.900V27.600H7.200V31.800z" fill="url(#gra)" stroke="#a01018" stroke-width="0.500"/></symbol>
<symbol id="i-mview" viewBox="0 0 27 31"><path d="M3.75 0.75H18.95L25.45 7.25V28.45Q25.45 29.45 24.45 29.45H3.75Q2.75 29.45 2.75 28.45V1.75Q2.75 0.75 3.75 0.75z" fill="#fff" stroke="#5c5c5c" stroke-width="1.15" stroke-linejoin="round"/><path d="M18.95 0.75V7.25H25.45z" fill="#e4e4e4" stroke="#5c5c5c" stroke-width="0.92" stroke-linejoin="round"/><rect x="5" y="3" width="12" height="3.9" fill="#f0a463"/><path d="M6.200 11.5H21.900" stroke="#b4b4b4" stroke-width="0.800"/><path d="M6.200 13.5H21.900" stroke="#b4b4b4" stroke-width="0.800"/><path d="M6.200 15.5H21.900" stroke="#b4b4b4" stroke-width="0.800"/><path d="M6.200 17.5H21.900" stroke="#b4b4b4" stroke-width="0.800"/><path d="M6.200 19.5H21.900" stroke="#b4b4b4" stroke-width="0.800"/><path d="M6.200 21.5H21.900" stroke="#b4b4b4" stroke-width="0.800"/><path d="M6.200 23.5H21.900" stroke="#b4b4b4" stroke-width="0.800"/><path d="M6.200 25.5H21.900" stroke="#b4b4b4" stroke-width="0.800"/><circle cx="8" cy="15.900" r="5" fill="#fff" stroke="#1f5fa8" stroke-width="1.900"/><path d="M6.200 13.500h5.200M6.200 15.500h5.400M6.200 17.500h5.200" stroke="#555" stroke-width="0.900"/><path d="M4.200 19.800L0.900 22.900" stroke="#1f5fa8" stroke-width="2.300"/></symbol>
<symbol id="i-bin" viewBox="0 0 27 29"><path d="M1 4.400L11.800 0.900 26.200 5.600 15.500 9.800z" fill="#ececec"/><path d="M3.600 4.500L11.800 1.900 23.400 5.600 15.500 8.600z" fill="#d6d6d6"/><path d="M11.800 1.900L23.400 5.600 15.500 8.600 12 7z" fill="#e4e4e4"/><path d="M1 4.400L15.500 9.800 15 28.500 4 25.400z" fill="#eceef2"/><path d="M15.500 9.800L26.200 5.600 23 26.400 15 28.500z" fill="#bcc2c6"/><path d="M3.700 22.500L15.100 25.700 15 28.500 4 25.400z" fill="#d4d6dc"/><path d="M15.100 25.700L23.400 23.600 23 26.400 15 28.500z" fill="#a8aeb4"/><path d="M1 4.400L11.800 0.900 26.200 5.600 15.500 9.800z" fill="none" stroke="#fafafa" stroke-width="0.900"/><path transform="translate(0,1.300)" d="M6 12.600c0.600-2 3-2.800 4.800-1.600l1.400 1.600M13 17c-0.400 2-2.600 3.200-4.600 2.600M5.400 15c-0.200 1.600 0.600 3 1.800 3.800" fill="none" stroke="#1a80e0" stroke-width="2.700"/></symbol>
<symbol id="i-fview" viewBox="0 0 18 19"><path d="M4.75 1.75H12.25L16.25 5.75V16.75Q16.25 17.75 15.25 17.75H4.75Q3.75 17.75 3.75 16.75V2.75Q3.75 1.75 4.75 1.75z" fill="#fff" stroke="#5c5c5c" stroke-width="1.1" stroke-linejoin="round"/><path d="M12.25 1.75V5.75H16.25z" fill="#e4e4e4" stroke="#5c5c5c" stroke-width="0.88" stroke-linejoin="round"/><rect x="5" y="3" width="5.5" height="3" fill="#f0a463"/><path d="M6 8.5H14" stroke="#747474" stroke-width="0.8"/><path d="M6 10.5H14" stroke="#747474" stroke-width="0.8"/><path d="M6 12.5H14" stroke="#747474" stroke-width="0.8"/><path d="M6 14.5H14" stroke="#747474" stroke-width="0.8"/><circle cx="6.200" cy="12.400" r="2.700" fill="#fff" fill-opacity=".85" stroke="#3b73b4" stroke-width="1.400"/><path d="M4.200 14.600L1.600 17.200" stroke="#3b73b4" stroke-width="1.700" stroke-linecap="round"/></symbol>
<symbol id="i-fedit" viewBox="0 0 18 19"><path d="M2.75 1.75H10.25L14.25 5.75V16.75Q14.25 17.75 13.25 17.75H2.75Q1.75 17.75 1.75 16.75V2.75Q1.75 1.75 2.75 1.75z" fill="#fff" stroke="#5c5c5c" stroke-width="1.1" stroke-linejoin="round"/><path d="M10.25 1.75V5.75H14.25z" fill="#e4e4e4" stroke="#5c5c5c" stroke-width="0.88" stroke-linejoin="round"/><rect x="3" y="3" width="5.5" height="3" fill="#f0a463"/><path d="M4 8.5H12" stroke="#747474" stroke-width="0.8"/><path d="M4 10.5H12" stroke="#747474" stroke-width="0.8"/><path d="M4 12.5H12" stroke="#747474" stroke-width="0.8"/><path d="M4 14.5H12" stroke="#747474" stroke-width="0.8"/><path d="M7 15.400l0.900-2.700 5.900-5.900 1.800 1.800-5.900 5.900z" fill="#3b73b4"/><path d="M5.800 16.400l1.200-1" stroke="#3b73b4" stroke-width="1.100"/></symbol>
<symbol id="i-fcopy" viewBox="0 0 18 19"><path d="M1.75 1.75H6.75L9.75 4.75V13.25Q9.75 14.25 8.75 14.25H1.75Q0.75 14.25 0.75 13.25V2.75Q0.75 1.75 1.75 1.75z" fill="#fff" stroke="#5c5c5c" stroke-width="1.1" stroke-linejoin="round"/><path d="M6.75 1.75V4.75H9.75z" fill="#e4e4e4" stroke="#5c5c5c" stroke-width="0.88" stroke-linejoin="round"/><rect x="2" y="3" width="4" height="2.5" fill="#f0a463"/><path d="M2.75 8.5H7.75" stroke="#747474" stroke-width="0.8"/><path d="M2.75 10.5H7.75" stroke="#747474" stroke-width="0.8"/><path d="M2.75 12.5H7.75" stroke="#747474" stroke-width="0.8"/><path d="M6.75 5.75H13.75L16.75 8.75V17.25Q16.75 18.25 15.75 18.25H6.75Q5.75 18.25 5.75 17.25V6.75Q5.75 5.75 6.75 5.75z" fill="#fff" stroke="#5c5c5c" stroke-width="1.1" stroke-linejoin="round"/><path d="M13.75 5.75V8.75H16.75z" fill="#e4e4e4" stroke="#5c5c5c" stroke-width="0.88" stroke-linejoin="round"/><rect x="7" y="7" width="4.25" height="2.5" fill="#f0a463"/><path d="M8 12.5H14.5" stroke="#747474" stroke-width="0.8"/><path d="M8 14.5H14.5" stroke="#747474" stroke-width="0.8"/><path d="M8 16.5H14.5" stroke="#747474" stroke-width="0.8"/><path d="M14 0.500v6.400M10.800 3.700h6.400" stroke="#3fa576" stroke-width="1.900"/></symbol>
<symbol id="i-fmove" viewBox="0 0 18 19"><path d="M0.800 1.600h6M0.800 1.600v12h4" fill="none" stroke="#666" stroke-width="1.100" stroke-dasharray="1 1.100"/><path d="M2.200 3.400l3.400 1.600M2.200 5l3.400-1.600" stroke="#f0a463" stroke-width="0.800"/><path d="M6.75 5.75H13.75L16.75 8.75V17.25Q16.75 18.25 15.75 18.25H6.75Q5.75 18.25 5.75 17.25V6.75Q5.75 5.75 6.75 5.75z" fill="#fff" stroke="#5c5c5c" stroke-width="1.1" stroke-linejoin="round"/><path d="M13.75 5.75V8.75H16.75z" fill="#e4e4e4" stroke="#5c5c5c" stroke-width="0.88" stroke-linejoin="round"/><rect x="7" y="7" width="4.25" height="2.5" fill="#f0a463"/><path d="M8 12.5H14.5" stroke="#747474" stroke-width="0.8"/><path d="M8 14.5H14.5" stroke="#747474" stroke-width="0.8"/><path d="M8 16.5H14.5" stroke="#747474" stroke-width="0.8"/><path d="M7.600 4C9.600 0.800 14.400 1 15.600 4.400" fill="none" stroke="#d8443c" stroke-width="1.800"/><path d="M12.600 4.600h5l-1.400 3.200z" fill="#d8443c"/></symbol>
<symbol id="i-fnew" viewBox="0 0 20 20"><path d="M9 6.800V6.300Q9 5.600 9.700 5.600H19V6.800z" fill="#7a7a7a"/><path d="M2 8.200H19.900V18.500Q19.900 19.750 18.650 19.750H3.250Q2 19.750 2 18.500z" fill="#e9b766"/><circle cx="4.250" cy="4.750" r="3.400" fill="#fbfbfb"/><path d="M4.250 0.400v8.700M-0.100 4.750h8.700M1.200 1.700l6.100 6.100M7.300 1.700L1.200 7.800" stroke="#f0a030" stroke-width="0.900"/><circle cx="4.250" cy="4.750" r="1.200" fill="#fff"/></symbol>
<symbol id="i-fdel" viewBox="0 0 18 19"><path d="M3.400 2.400L9 7.600 14.600 2.400 16.600 4.600 11.400 9.800 16.600 15 14.600 17.200 9 12 3.400 17.200 1.400 15 6.600 9.800 1.400 4.600z" fill="#d04a2f"/></symbol>
<symbol id="i-fexit" viewBox="0 0 19 20"><rect x="9.400" y="2.400" width="8.200" height="15.200" fill="#a8e4f0" stroke="#aaa4e0" stroke-width="1"/><path d="M13.600 3l3.500 0v3.200a3 3 0 0 1-3.500-3.200z" fill="#f4e050"/><path d="M9.900 11.500l3-4.500 4.200 5v5.100H9.900z" fill="#38a838"/><path d="M9.900 13.500l3.500-2 3.700 3.500v2.100H9.900z" fill="#1e8a2a"/><path d="M1 2.300L10.200 0.200V19.800L1 17.200z" fill="#b9b5ec" stroke="#9a94dc" stroke-width="0.700"/><circle cx="6.600" cy="11.200" r="1.300" fill="#fff"/></symbol>
<symbol id="i-restore" viewBox="0 0 19 17"><path d="M5.200 0.450H16.500V11.800" fill="none" stroke="#4a4a4a" stroke-width="0.900"/><path d="M3.100 2.500H14.500V13.800" fill="none" stroke="#51435a" stroke-width="0.900"/><rect x="2.450" y="5.500" width="9" height="8.800" fill="#fff" stroke="#2b68a8" stroke-width="3"/></symbol>
<symbol id="i-tb_start" viewBox="0 0 20 21"><rect x="0" y="0" width="10" height="9.800" fill="#479fe2"/><rect x="12" y="3" width="7" height="6.800" fill="#f4f4fa"/><rect x="2" y="12" width="8" height="8" fill="#f4f4fa"/><rect x="12" y="12" width="6.200" height="5.800" fill="#e8e8f4"/></symbol>
<symbol id="i-tb_view" viewBox="0 0 18 16"><path d="M1.500 0v2.500h10V0M1.500 15.200v-2.700h10v2.700" fill="none" stroke="#fff" stroke-width="1"/><rect x="1.500" y="4.500" width="10" height="6" fill="none" stroke="#fff" stroke-width="1"/><path d="M15.500 0v3M15.500 8.200v7" stroke="#fff" stroke-width="1.200"/><rect x="13.800" y="4" width="3.400" height="3" fill="#fff"/></symbol>
<symbol id="i-tb_edge" viewBox="0 0 22 22"><path d="M1.200 9.800C2 3.800 6.400 0.600 11.600 0.600c5.600 0 9.200 4 9.200 10v2.400H8.400c0.200 3.200 2.600 4.800 5.800 4.800 2.200 0 4-0.600 5.800-1.600v4.200c-2 1-4.200 1.400-6.800 1.400-6 0-9.800-3.600-9.800-9.200 0-3 1.400-5.600 3.800-7.200C4.600 6 2.600 7.600 1.200 9.800zM8.600 9.200h6.800c0-2.400-1.200-4-3.400-4s-3.200 1.800-3.400 4z" fill="#1178d2"/></symbol>
<symbol id="i-tb_chrome" viewBox="0 0 22 22"><circle cx="11" cy="11" r="10.800" fill="#fbc116"/><path d="M11 11L1.650 5.600A10.800 10.800 0 0 1 20.350 5.600z" fill="#dc4437"/><path d="M1.650 5.600A10.800 10.800 0 0 1 20.350 5.600L11 6.200z" fill="#dc4437"/><path d="M1.650 5.600A10.800 10.800 0 0 0 11 21.800L15.200 13.400 6.800 13.400z" fill="#1da462"/><path d="M11 11L1.650 5.600 6.800 13.400z" fill="#1da462"/><path d="M20.350 5.600H11l4.200 7.800L11 21.800A10.800 10.800 0 0 0 20.350 5.600z" fill="#fbc116"/><circle cx="11" cy="11" r="5" fill="#f4f4f4"/><circle cx="11" cy="11" r="3.900" fill="#4a8af4"/></symbol>
<symbol id="i-tb_opera" viewBox="0 0 22 23"><defs><linearGradient id="gop" x1="0" y1="0" x2="1" y2="0"><stop offset="0" stop-color="#e81a2c"/><stop offset=".7" stop-color="#f0202c"/><stop offset="1" stop-color="#a8101c"/></linearGradient></defs><ellipse cx="11" cy="11.500" rx="11" ry="11.200" fill="url(#gop)"/><ellipse cx="10" cy="11.500" rx="5.200" ry="8.400" fill="#0f1923"/></symbol>
<symbol id="i-tb_w" viewBox="0 0 24 21"><defs><linearGradient id="gw" x1="0" y1="0" x2="1" y2="0"><stop offset="0" stop-color="#18a8e8"/><stop offset=".55" stop-color="#38c4f4"/><stop offset="1" stop-color="#6a78e0"/></linearGradient></defs><path d="M1.600 8.200l4.400 10.600 5.800-9.800 5.400 9.800 5.200-10.600" fill="none" stroke="url(#gw)" stroke-width="3.600" stroke-linecap="round" stroke-linejoin="round"/><circle cx="8" cy="5.800" r="1.400" fill="#4fd0f8"/><circle cx="11.400" cy="3" r="1.700" fill="#4fd0f8"/><circle cx="14.600" cy="5.400" r="1.300" fill="#bfe8fa"/><circle cx="16.600" cy="2" r="1.100" fill="#7fdcfa"/></symbol>
<symbol id="i-tb_ff" viewBox="0 0 24 24"><defs><radialGradient id="gff" cx=".6" cy=".25" r=".85"><stop offset="0" stop-color="#fff04a"/><stop offset=".35" stop-color="#ff9a1a"/><stop offset=".7" stop-color="#ff3a50"/><stop offset="1" stop-color="#c81e9a"/></radialGradient></defs><path d="M12 23.600C5.400 23.600 0.800 19 0.800 13c0-3 1.200-5.800 2.400-7.200 0 1.200 0.400 2.200 1 2.800C5 6.200 6.800 4.800 8 4.400c-0.400 1 0 2 0.800 2.600C10.400 4.600 11.600 2 12.600 0.400c0.600 2.800 3.400 4 5.600 6.200 3 2.600 5 5 5 8.600 0 5-5 8.400-11.200 8.400z" fill="url(#gff)"/><circle cx="11.800" cy="13.400" r="5" fill="#7a3ce0"/><path d="M6.600 10.800c1.600-0.200 3.200 0.200 4.200 1.200h3.200c-0.400 1.200-1.400 2.200-3 2.400 1.800 1.800 5 1 6-1.600 0.800 2.600-0.400 6-4.200 6.600-3.800 0.400-7.200-3-6.200-8.600z" fill="#ff8a1e" fill-opacity=".85"/></symbol>
<symbol id="i-tb_tb" viewBox="0 0 24 24"><circle cx="12" cy="12" r="11.600" fill="#1a66c8"/><path d="M12 0.400c4 2 7 6 7.400 11.600 0.200 5-2.400 9.600-7.400 11.600 6.400 0 11.600-5.200 11.600-11.600S18.400 0.400 12 0.400z" fill="#3e9ae8"/><path d="M1.800 9.600l6.800-2.200 8.800 2.200v9l-8.400 2.200-6.600-4.200c-1-2.200-1.200-4.800-0.600-7z" fill="#f4f4f0"/><path d="M2 10.200l7.600 5.200 7.600-5" fill="none" stroke="#c8d4e0" stroke-width="1"/><path d="M5 8.600c1-1.800 3-2.800 5-2.400" fill="none" stroke="#12408a" stroke-width="1.600"/></symbol>
<symbol id="i-tb_fz" viewBox="0 0 24 24"><rect x="0.600" y="0.600" width="22.800" height="22.800" fill="#a80404" stroke="#c01818" stroke-width="1.200" stroke-dasharray="1.200 1.200"/><rect x="1.400" y="1.400" width="21.200" height="21.200" fill="#b00000"/><path d="M4.600 19L7.600 4.600h7.800l-0.600 2.800h-4.800l-0.600 3h4.200l-0.500 2.600H8.900L7.700 19zM12.400 19l0.500-2.400 5.200-5.400h-3.800l0.500-2.400h7.400l-0.500 2.400-5.200 5.400h4.400L20.400 19z" fill="#fff"/></symbol>
<symbol id="i-tb_lock" viewBox="0 0 24 24"><path d="M0.400 0.400h7.400L5.800 2.600l3 3L6.200 8.200l-3-3L0.400 7.800z" fill="#1a78f0"/><path d="M8.800 12V6.800c0-2.600 1.600-4.200 4-4.200s4 1.600 4 4.200V12" fill="none" stroke="#d8d8d8" stroke-width="2.200"/><defs><linearGradient id="glk" x1="0" y1="0" x2="1" y2="0"><stop offset="0" stop-color="#5a5a5a"/><stop offset=".4" stop-color="#b0b0b0"/><stop offset="1" stop-color="#5e5e5e"/></linearGradient></defs><rect x="5.200" y="9.600" width="14.400" height="9.400" rx="1" fill="url(#glk)"/><path d="M23.600 23.600h-8l2.400-2.400-3.400-3.400 2.800-2.800 3.400 3.400 2.800-2.600z" fill="#18c838"/></symbol>
<symbol id="i-tb_exp" viewBox="0 0 23 19"><path d="M0.400 2.400Q0.400 1 1.800 1H8.400L10 2.600H21.200Q22.600 2.600 22.600 4V17H0.400z" fill="#f0b83c"/><path d="M0.400 4.400H22.600V17.400Q22.600 18.200 21.800 18.200H1.200Q0.400 18.200 0.400 17.400z" fill="#fbd872"/><path d="M4.400 18.200V12.800Q4.400 11.200 6 11.200H17Q18.600 11.200 18.600 12.800V18.200H14.800V14.400H8.200V18.200z" fill="#3c94e0"/></symbol>
<symbol id="i-tb_store" viewBox="0 0 24 24"><path d="M7.600 7.400V5.400a4.400 4.400 0 0 1 8.800 0V7.400" fill="none" stroke="#fff" stroke-width="1.300"/><path d="M0.600 6.800H23.400V22Q23.400 23.400 22 23.400H2Q0.600 23.400 0.600 22z" fill="#fff"/><rect x="6.600" y="9.800" width="4.800" height="4.800" fill="#f0501e"/><rect x="12.600" y="9.800" width="4.800" height="4.800" fill="#7eba00"/><rect x="6.600" y="15.800" width="4.800" height="4.800" fill="#00a4ee"/><rect x="12.600" y="15.800" width="4.800" height="4.800" fill="#fdb800"/></symbol>
<symbol id="i-tb_mail" viewBox="0 0 25 21"><path d="M0 6.400L12.100 0.800 24.200 6.400V20H0z" fill="#fff"/><path d="M1.200 7H22.800L13.800 11.600 18.600 16.600z" fill="#0c1a22"/></symbol>
<symbol id="i-tb_cc" viewBox="0 0 25 22"><path d="M23.400 5.600C21 1.600 16 -0.200 11.400 1.400 6 3.200 3.400 9 5.400 14.400c2 5.400 8 8 13.400 6 2.200-0.800 4-2.400 5.200-4.200l-4.600-2.800c-1.600 2.400-4.800 3-7 1.400-2.600-1.800-3-5.600-0.800-7.800 2-2.200 5.400-2.200 7.400 0.200z" fill="#d8281e"/><path d="M13.800 1.600l1.800 0.400-3 9.400-2.200-0.800z" fill="#2a7ad8"/><path d="M7 9.600l6.400 2.800-1.600 5.600c-1.400 2-3.600 3.600-7 3.400C2.200 20.800 0.600 19 0.400 17.400 3.200 16 5.800 13.200 7 9.600z" fill="#f4cf94"/><path d="M8.600 9.200l5.200 2.200-0.600 2-5.400-2.400z" fill="#3c8ae0"/></symbol>
<symbol id="i-tb_fc" viewBox="0 0 24 24"><defs><radialGradient id="gfc" cx=".5" cy=".45" r=".55"><stop offset="0" stop-color="#7ccaf6"/><stop offset=".6" stop-color="#48a4ea"/><stop offset="1" stop-color="#1c68c8"/></radialGradient></defs><circle cx="12" cy="12" r="11.600" fill="url(#gfc)" stroke="#1c5cb8" stroke-width="0.600"/><circle cx="12" cy="12" r="8.200" fill="none" stroke="#cfe8fb" stroke-width="0.700" stroke-dasharray="1 1.600"/><path d="M12 1.600l1 3.400h-2zM12 22.400l1-3.400h-2zM1.600 12l3.400-1v2zM22.400 12l-3.400-1v2z" fill="#fff"/><path d="M4.800 4.800l2.400 1.400-1 1zM19.200 4.800l-2.400 1.400 1 1zM4.800 19.200l2.400-1.400-1-1zM19.200 19.200l-2.400-1.400 1-1z" fill="#e4f2fc"/><circle cx="12" cy="12.200" r="4.900" fill="#f8b238"/><path d="M12 7.800v4.400l-3.800 2.400M12 12.200l3.800 2.400" fill="none" stroke="#e09418" stroke-width="0.900"/></symbol>
<symbol id="i-tb_kp" viewBox="0 0 23 23"><defs><radialGradient id="gkp" cx=".4" cy=".35" r=".7"><stop offset="0" stop-color="#e4e8ff"/><stop offset=".6" stop-color="#a8b4f4"/><stop offset="1" stop-color="#6878d0"/></radialGradient></defs><circle cx="11.500" cy="11.500" r="10.800" fill="url(#gkp)" stroke="#f4f4f8" stroke-width="1.200"/><path d="M7.800 11V8.200a3.700 3.700 0 0 1 7.400 0V11" fill="none" stroke="#10142c" stroke-width="2"/><rect x="5.400" y="10.400" width="12.200" height="8" fill="#10142c"/><path d="M5.400 13h12.200M5.400 15.600h12.200" stroke="#8c98e0" stroke-width="0.800"/><rect x="10.600" y="12.800" width="1.800" height="3" fill="#8c98e0"/></symbol>
<symbol id="i-tb_64" viewBox="0 0 24 25"><rect width="24" height="24.400" fill="#c00008"/><g transform="translate(11.800,19.400) skewX(-5)"><text x="0" y="0" font-family="Liberation Sans" font-size="18.500" font-weight="bold" fill="#fff" text-anchor="middle" letter-spacing="-1.300" stroke="#6a0000" stroke-width="0.400" paint-order="stroke">64</text></g></symbol>
<symbol id="i-tb_vlc" viewBox="0 0 20 23"><defs><linearGradient id="gvl" x1="0" y1="0" x2="0" y2="1"><stop offset="0" stop-color="#f08a10"/><stop offset="1" stop-color="#fbb320"/></linearGradient></defs><path d="M4 13.600L1 21Q0.500 22.800 2 22.800H18Q19.500 22.800 19 21L16 13.600z" fill="url(#gvl)"/><path d="M8.500 1.600Q10 0.600 11.500 1.600L15.400 15.600Q10 18.500 4.600 15.600z" fill="#f07c08"/><path d="M7.700 4.500h4.600l0.850 3H6.850z" fill="#eeeeee"/><path d="M6 10.500h8l1.100 4Q10 16.500 4.900 14.500z" fill="#e4e4e4"/></symbol>
<symbol id="i-tb_disc" viewBox="0 0 24 24"><defs><linearGradient id="gdc" x1="0" y1="0" x2="1" y2="1"><stop offset="0" stop-color="#f4f4f4"/><stop offset=".5" stop-color="#b4b4b4"/><stop offset="1" stop-color="#e8e8e8"/></linearGradient></defs><circle cx="12" cy="12" r="11.600" fill="url(#gdc)" stroke="#8a8a8a" stroke-width="0.500"/><path d="M12 12L0.800 9l0.600-2.400z" fill="#70e050"/><path d="M12 12l11-3.200 0.400 1.600z" fill="#e8a0e0"/><path d="M1.400 16l2-4 1.800 3 1.600-4.200 2 4 1.600-3.600 1.600 3.400 1.600-3.800 1.800 4 1.800-4.400 1.800 4.600 1.800-3.200 1.800 4.200A11.600 11.600 0 0 1 1.400 16z" fill="#f0901a"/><path d="M3.600 19l1.600-2.200 1.800 1.800 1.800-2.600 1.800 2.400 1.600-2.200 1.800 2.400 1.800-2.600 1.800 2.600 1.600-1.800 1.200 2.200A11.600 11.600 0 0 1 3.600 19z" fill="#f8d030"/><circle cx="12" cy="11.600" r="3.200" fill="#7a7e84"/><circle cx="12" cy="11.600" r="1.500" fill="#20242a"/></symbol>
<symbol id="i-tb_face" viewBox="0 0 24 24"><circle cx="12" cy="12" r="10.800" fill="#e8a010" stroke="#f0a418" stroke-width="1.600"/><circle cx="12" cy="12" r="9.400" fill="#f0a820" stroke="#5a3204" stroke-width="0.700"/><path d="M5.600 8.600Q4.200 5.200 8 4.800Q9.600 2.200 12.400 3.400Q15.600 2.400 16.800 5.200Q20 6.200 18.200 9.600L16 11.400H7.600z" fill="#f8f8f8" stroke="#4a2a04" stroke-width="0.700"/><path d="M4.800 12.200l5.200-1.200 0.700 3.200-5.200 1.200z" fill="#f4f4f4" stroke="#4a2a04" stroke-width="0.600"/><path d="M10.600 11l5.800-1 0.700 3.200-5.800 1z" fill="#f4f4f4" stroke="#4a2a04" stroke-width="0.600"/><path d="M5.800 12.800l3.400-0.800 0.400 1.800-3.400 0.800z" fill="#24a05a"/><path d="M11.600 11.700l4-0.700 0.400 1.800-4 0.700z" fill="#d82828"/><path d="M7.600 17Q11 20.600 16.400 16.200L15.200 19.400Q11 21.600 8.400 19.400z" fill="#f8c040" stroke="#4a2a04" stroke-width="0.700"/><path d="M17.400 9.800l3.600-3.400 0.900 1.300-3.100 3.500z" fill="#f8e0a0" stroke="#4a2a04" stroke-width="0.500"/><path d="M18 12.200c1.600 0.800 1.800 3.400 0.400 5" fill="none" stroke="#fff" stroke-width="1.300"/></symbol>
<symbol id="i-tb_globe" viewBox="0 0 23 23"><defs><radialGradient id="ggl" cx=".35" cy=".35" r=".7"><stop offset="0" stop-color="#2c6a7a"/><stop offset="1" stop-color="#0a2440"/></radialGradient></defs><circle cx="9" cy="10.600" r="8.400" fill="url(#ggl)"/><path d="M1.200 8.200c1-3.400 4-5.600 7.200-5.800l2.400 1.400-1.400 2 1 2.400-3 1.600-0.600 2.600-2.800 0.400-1.600-2z" fill="#a4cc1c"/><path d="M4.800 13.400l3.600 0.600 2.400 2.400-1.400 3c-2.400-0.600-4.200-3-4.600-6z" fill="#86b818"/><path d="M12.400 5.200l2.400 0.800 0.800 2.400-1.600 0.600z" fill="#7aa814"/><path d="M10.600 1.400C16 2.600 19 10 18.200 18.600" fill="none" stroke="#f0b80c" stroke-width="2.400"/><path d="M5.400 20.400C11.400 20.600 15 16.400 16.400 12.400" fill="none" stroke="#e8a80c" stroke-width="2"/><path d="M13.600 17.400h9l-3.800 5.400z" fill="#f0b80c"/></symbol>
<symbol id="i-tb_db" viewBox="0 0 25 18"><ellipse cx="12.400" cy="14.600" rx="12" ry="3" fill="#e8e8ea" stroke="#a0a0a4" stroke-width="0.600"/><rect x="13.200" y="1.200" width="9" height="11.600" fill="#5a6a8a"/><path d="M13.200 3.400h9M13.200 6h9M13.200 8.600h9M13.200 11.200h9" stroke="#dfe6f4" stroke-width="1.100"/><ellipse cx="17.700" cy="1.400" rx="4.500" ry="1.200" fill="#f0f0f4"/><rect x="2.400" y="5.600" width="12" height="9" fill="#dcdce4"/><path d="M2.400 8h12M2.400 10.600h12M2.400 13.200h12" stroke="#6a78b8" stroke-width="1"/><ellipse cx="8.400" cy="5.600" rx="6" ry="1.700" fill="#f6f6f8"/><ellipse cx="8.400" cy="14.600" rx="6" ry="1.500" fill="#c8c8d4"/></symbol>
<symbol id="i-tb_a" viewBox="0 0 24 25"><rect x="4" y="0.400" width="20" height="20.400" fill="#4a88dc"/><rect x="0" y="4.200" width="20" height="20.400" fill="#5a94e2"/><rect x="4" y="4.200" width="16" height="16.600" fill="#2a4aa4"/><path d="M8.200 16.400L11.600 7.800h1l3.400 8.600M9.600 13.400h5" fill="none" stroke="#fff" stroke-width="1.300"/></symbol>
<symbol id="i-tb_note" viewBox="0 0 23 22"><path d="M7.600 0.800L20.400 3.600 18.400 20.800 1 14.800z" fill="#c4e4ea"/><path d="M7.600 0.800L20.400 3.600 19.800 8.600 5.600 5z" fill="#e6f4f6"/><path d="M1 14.800L8.400 9l11.200 3.600-1.200 8.200z" fill="#7fbccb" fill-opacity=".75"/><path d="M7.400 0.600l13.200 2.800-0.200 1.600-13.400-3z" fill="#f4fafb"/><path d="M20.400 3.600l1.800 1.800-1.200 14.600-2.600 0.800z" fill="#d8a038"/><path d="M1 14.800l17.400 6-0.400 0.800L1.400 15.800z" fill="#eef2f4"/></symbol>
<symbol id="i-tr_up" viewBox="0 0 12 7"><path d="M0.800 6.400L6 1.200l5.200 5.200" fill="none" stroke="#fff" stroke-width="1.200"/></symbol>
<symbol id="i-tr_net" viewBox="0 0 17 14"><rect x="4.600" y="1.600" width="11.600" height="8" fill="none" stroke="#fff" stroke-width="1.100"/><path d="M8.400 9.600v2.800M5 12.600h9" stroke="#fff" stroke-width="1.100" fill="none"/><rect x="0.600" y="0.600" width="4.400" height="3.400" fill="#0f1a23" stroke="#fff" stroke-width="0.900"/><path d="M2.800 4v8.400" stroke="#fff" stroke-width="1"/><path d="M1.800 2.300h2" stroke="#fff" stroke-width="0.800"/></symbol>
<symbol id="i-tr_vol" viewBox="0 0 17 14"><path d="M0.600 4.800h2.600L6.600 1.600v10.800L3.200 9.200H0.600z" fill="none" stroke="#fff" stroke-width="1"/><path d="M8.800 4.800q1.600 2.200 0 4.400M11 3q3 4 0 8M13.400 1.400q4.200 5.600 0 11.200" fill="none" stroke="#fff" stroke-width="1"/></symbol>
<symbol id="i-tr_msg" viewBox="0 0 17 16"><path d="M0.600 0.600H16.400V11.600H10.400L8 14.600V11.600H0.600z" fill="none" stroke="#fff" stroke-width="1.100" stroke-linejoin="round"/></symbol>
</defs></svg>
<div style="left:0px;top:0px;width:1600px;height:23px;background:#fff"></div>
<svg class="a" style="left:2px;top:3px" width="16" height="16" viewBox="0 0 16 16"><use href="#i-app" x="0" y="0" width="16" height="16"/></svg>
<span class="t" style="left:23px;top:6.029999999999999px;font-size:12px;line-height:12px;letter-spacing:-0.27px">Questo PC - FreeCommander XE</span>
<svg class="a" style="left:1470px;top:0" width="130" height="23" viewBox="0 0 130 23"><g stroke="#000" stroke-width="1" fill="none"><path d="M9 10.5h10"/><path d="M54.5 7.5h7v7h-7zM56.5 7.500v-2h7v7h-2"/><path d="M100 5l10 10M110 5l-10 10"/></g></svg>
<div style="left:0px;top:23px;width:1600px;height:20px;background:#f0f0f0"></div>
<span class="t" style="left:7.5px;top:27.03px;font-size:12px;line-height:12px;letter-spacing:-0.45px">File</span>
<span class="t" style="left:39.5px;top:27.03px;font-size:12px;line-height:12px;letter-spacing:0.2px">Modifica</span>
<span class="t" style="left:100.5px;top:27.03px;font-size:12px;line-height:12px;letter-spacing:-0.3px">Cartella</span>
<span class="t" style="left:154.5px;top:27.03px;font-size:12px;line-height:12px;letter-spacing:-0.15px">Preferiti</span>
<span class="t" style="left:209.5px;top:27.03px;font-size:12px;line-height:12px;letter-spacing:-0.45px">Visualizza</span>
<span class="t" style="left:273px;top:27.03px;font-size:12px;line-height:12px;letter-spacing:-0.5px">Extra</span>
<span class="t" style="left:313px;top:27.03px;font-size:12px;line-height:12px;letter-spacing:0px">?</span>
<div style="left:0px;top:43px;width:1600px;height:28px;background:linear-gradient(#fefefe,#f4f4f4 45%,#e9e9e9)"></div>
<div style="left:0px;top:71px;width:1600px;height:1px;background:#a9a9a9"></div>
<svg class="a" style="left:3px;top:50px" width="22" height="15" viewBox="0 0 22 15"><use href="#i-back" x="0.5" y="0" width="21" height="15"/></svg>
<svg class="a" style="left:31px;top:57px" width="7" height="4" viewBox="0 0 7 4"><use href="#i-dd" x="0.9" y="0" width="5.6" height="3.2"/></svg>
<svg class="a" style="left:41px;top:50px" width="22" height="15" viewBox="0 0 22 15"><use href="#i-fwd" x="0.5" y="0" width="21" height="15"/></svg>
<svg class="a" style="left:69px;top:57px" width="7" height="4" viewBox="0 0 7 4"><use href="#i-ddg" x="0.9" y="0" width="5.6" height="3.2"/></svg>
<div style="left:80px;top:47px;width:1px;height:20px;background:#8c8c8c"></div>
<svg class="a" style="left:88px;top:47px" width="18" height="21" viewBox="0 0 18 21"><use href="#i-tview" x="0" y="0" width="18" height="21"/></svg>
<svg class="a" style="left:114px;top:47px" width="19" height="21" viewBox="0 0 19 21"><use href="#i-tedit" x="0" y="0" width="19" height="21"/></svg>
<svg class="a" style="left:136px;top:47px" width="21" height="21" viewBox="0 0 21 21"><use href="#i-tcopy" x="0" y="0" width="21" height="21"/></svg>
<svg class="a" style="left:160px;top:47px" width="21" height="21" viewBox="0 0 21 21"><use href="#i-tmove" x="0" y="0" width="21" height="21"/></svg>
<svg class="a" style="left:186px;top:48px" width="17" height="18" viewBox="0 0 17 18"><use href="#i-tdel" x="0" y="0.5" width="17" height="17"/></svg>
<svg class="a" style="left:210px;top:47px" width="19" height="21" viewBox="0 0 19 21"><use href="#i-tsearch" x="0" y="0" width="19" height="21"/></svg>
<svg class="a" style="left:235px;top:57px" width="7" height="4" viewBox="0 0 7 4"><use href="#i-dd" x="0.9" y="0" width="5.6" height="3.2"/></svg>
<div style="left:246px;top:47px;width:1px;height:20px;background:#8c8c8c"></div>
<svg class="a" style="left:254px;top:47px" width="20" height="20" viewBox="0 0 20 20"><use href="#i-ttree" x="0" y="0" width="20" height="20"/></svg>
<svg class="a" style="left:278px;top:48px" width="20" height="19" viewBox="0 0 20 19"><use href="#i-tlist" x="0" y="0" width="20" height="19"/></svg>
<div style="left:300px;top:45px;width:24px;height:24px;background:linear-gradient(#6daeea,#a8cff4 30%,#d4e8fb);border:1px solid #0a74d8;box-sizing:border-box"></div>
<svg class="a" style="left:302px;top:48px" width="20" height="19" viewBox="0 0 20 19"><use href="#i-tdetail" x="0" y="0" width="20" height="19"/></svg>
<svg class="a" style="left:326px;top:48px" width="20" height="19" viewBox="0 0 20 19"><use href="#i-tthumb" x="0" y="0" width="20" height="19"/></svg>
<svg class="a" style="left:350px;top:48px" width="20" height="19" viewBox="0 0 20 19"><use href="#i-tthumb" x="0" y="0" width="20" height="19"/></svg>
<svg class="a" style="left:377px;top:57px" width="6" height="4" viewBox="0 0 6 4"><use href="#i-dd" x="0.4" y="0" width="5.6" height="3.2"/></svg>
<svg class="a" style="left:389px;top:47px" width="17" height="21" viewBox="0 0 17 21"><use href="#i-trefresh" x="0" y="0" width="17" height="21"/></svg>
<div style="left:412px;top:47px;width:1px;height:20px;background:#8c8c8c"></div>
<svg class="a" style="left:420px;top:47px" width="20" height="19" viewBox="0 0 20 19"><use href="#i-tcheck" x="0" y="0" width="20" height="19"/></svg>
<svg class="a" style="left:446px;top:48px" width="17" height="18" viewBox="0 0 17 18"><use href="#i-tgrid" x="0" y="0.7" width="17" height="17"/></svg>
<svg class="a" style="left:471px;top:57px" width="7" height="4" viewBox="0 0 7 4"><use href="#i-dd" x="0.9" y="0" width="5.6" height="3.2"/></svg>
<svg class="a" style="left:482px;top:47px" width="21" height="21" viewBox="0 0 21 21"><use href="#i-tselect" x="0" y="0" width="21" height="21"/></svg>
<svg class="a" style="left:509px;top:57px" width="7" height="4" viewBox="0 0 7 4"><use href="#i-dd" x="0.9" y="0" width="5.6" height="3.2"/></svg>
<svg class="a" style="left:521px;top:49px" width="19" height="18" viewBox="0 0 19 18"><use href="#i-tsfolder" x="0" y="0.5" width="19" height="17"/></svg>
<div style="left:0px;top:72px;width:1600px;height:768px;background:#f0f0f0"></div>
<div style="left:0px;top:72px;width:1px;height:722px;background:#a9a9a9"></div>
<div style="left:1px;top:72px;width:796px;height:24px;background:linear-gradient(#ffffff,#f6f6f6 45%,#e9e9e9)"></div>
<svg class="a" style="left:4px;top:72px" width="17" height="18" viewBox="0 0 17 18"><use href="#i-drvc" x="0.5" y="0.4" width="16" height="17"/></svg>
<span class="t" style="left:25px;top:77.03px;font-size:12px;line-height:12px;">C</span>
<svg class="a" style="left:42px;top:72px" width="17" height="18" viewBox="0 0 17 18"><use href="#i-drv" x="0.5" y="0.4" width="16" height="17"/></svg>
<span class="t" style="left:62px;top:77.03px;font-size:12px;line-height:12px;">D</span>
<svg class="a" style="left:79px;top:72px" width="17" height="18" viewBox="0 0 17 18"><use href="#i-drv" x="0.5" y="0.4" width="16" height="17"/></svg>
<span class="t" style="left:99.5px;top:77.03px;font-size:12px;line-height:12px;">E</span>
<svg class="a" style="left:116px;top:72px" width="17" height="18" viewBox="0 0 17 18"><use href="#i-drv" x="0.5" y="0.4" width="16" height="17"/></svg>
<span class="t" style="left:136.5px;top:77.03px;font-size:12px;line-height:12px;">F</span>
<svg class="a" style="left:153px;top:72px" width="17" height="18" viewBox="0 0 17 18"><use href="#i-drv" x="0.5" y="0.4" width="16" height="17"/></svg>
<span class="t" style="left:172.5px;top:77.03px;font-size:12px;line-height:12px;">G</span>
<svg class="a" style="left:189px;top:72px" width="17" height="18" viewBox="0 0 17 18"><use href="#i-drvcd" x="0.5" y="0.4" width="16" height="17"/></svg>
<span class="t" style="left:210.5px;top:77.03px;font-size:12px;line-height:12px;">H</span>
<svg class="a" style="left:227px;top:72px" width="16" height="18" viewBox="0 0 16 18"><use href="#i-drvcd" x="0" y="0.4" width="16" height="17"/></svg>
<span class="t" style="left:247.5px;top:77.03px;font-size:12px;line-height:12px;">I</span>
<div style="left:260px;top:72px;width:37px;height:21px;background:linear-gradient(#9cc6f0,#cfe4f8);border:1px solid #1a7ad8;box-sizing:border-box"></div>
<svg class="a" style="left:264px;top:76px" width="16" height="12" viewBox="0 0 16 12"><use href="#i-desk" x="0" y="0" width="16" height="12"/></svg>
<span class="t" style="left:284px;top:77.03px;font-size:12px;line-height:12px;">0</span>
<svg class="a" style="left:300px;top:74px" width="18" height="16" viewBox="0 0 18 16"><use href="#i-net1" x="0.5" y="0" width="17" height="16"/></svg>
<span class="t" style="left:321px;top:77.03px;font-size:12px;line-height:12px;">1</span>
<svg class="a" style="left:337px;top:74px" width="18" height="16" viewBox="0 0 18 16"><use href="#i-net2" x="0.5" y="0" width="17" height="16"/></svg>
<span class="t" style="left:358px;top:77.03px;font-size:12px;line-height:12px;">2</span>
<div style="left:1px;top:96px;width:796px;height:23px;background:#fff"></div>
<div style="left:1px;top:97px;width:99px;height:22px;background:linear-gradient(#b0c4dc,#ccd8e6 45%,#eceef2);border:1px solid #9a9a9a;border-bottom:none;border-top:3px solid #0f6fce;border-radius:3px 3px 0 0;box-sizing:border-box"></div>
<span class="t" style="left:7.4px;top:102.33px;font-size:12px;line-height:12px;letter-spacing:0.05px">::Questo PC</span>
<svg class="a" style="left:85px;top:104px" width="9" height="9" viewBox="0 0 9 9"><use href="#i-xtab" x="0" y="0" width="9" height="9"/></svg>
<div style="left:759px;top:99px;width:18px;height:18px;background:linear-gradient(#f4f4f4,#dcdcdc);border:1px solid #c2c2c2;box-sizing:border-box"></div>
<div style="left:779px;top:99px;width:18px;height:18px;background:linear-gradient(#f4f4f4,#dcdcdc);border:1px solid #c2c2c2;box-sizing:border-box"></div>
<svg class="a" style="left:764px;top:106px" width="8" height="5" viewBox="0 0 8 5"><use href="#i-dd" x="0" y="0" width="8" height="4.5"/></svg>
<svg class="a" style="left:783px;top:104px" width="11" height="8" viewBox="0 0 11 8"><use href="#i-xbtn" x="0.3" y="0.5" width="10" height="7"/></svg>
<div style="left:1px;top:119px;width:796px;height:22px;background:#f0f0f0"></div>
<svg class="a" style="left:5px;top:124px" width="16" height="12" viewBox="0 0 16 12"><use href="#i-desk" x="0" y="0" width="16" height="12"/></svg>
<span class="t" style="left:27px;top:125.03px;font-size:12px;line-height:12px;letter-spacing:-0.100px">Questo PC</span>
<svg class="a" style="left:674px;top:123px" width="18" height="16" viewBox="0 0 18 16"><use href="#i-fhist" x="0" y="0" width="18" height="16"/></svg>
<svg class="a" style="left:695px;top:122px" width="21" height="18" viewBox="0 0 21 18"><use href="#i-ffav" x="0" y="0" width="21" height="18"/></svg>
<svg class="a" style="left:718px;top:123px" width="18" height="16" viewBox="0 0 18 16"><use href="#i-fup" x="0" y="0" width="18" height="16"/></svg>
<svg class="a" style="left:740px;top:123px" width="18" height="16" viewBox="0 0 18 16"><use href="#i-froot" x="0" y="0" width="18" height="16"/></svg>
<svg class="a" style="left:762px;top:121px" width="18" height="18" viewBox="0 0 18 18"><use href="#i-fcopy2" x="0" y="0" width="18" height="18"/></svg>
<svg class="a" style="left:787px;top:130px" width="7" height="4" viewBox="0 0 7 4"><use href="#i-dd" x="0.5" y="0" width="6.5" height="3.6"/></svg>
<div style="left:1px;top:141px;width:796px;height:631px;background:#fff"></div>
<span class="t" style="left:7px;top:148.03px;font-size:12px;line-height:12px;">Nome</span>
<span class="t" style="left:163px;top:148.03px;font-size:12px;line-height:12px;letter-spacing:-0.100px">Tipo</span>
<span class="t" style="right:1162.673px;top:148.03px;font-size:12px;line-height:12px;letter-spacing:0.027px">Dimensioni totali</span>
<span class="t" style="left:456.5px;top:148.03px;font-size:12px;line-height:12px;letter-spacing:-0.263px">Spazio disponibile</span>
<div style="left:1px;top:165px;width:796px;height:607px;background:repeating-linear-gradient(to bottom,transparent 0,transparent 17px,#ececec 17px,#ececec 18px)"></div>
<div style="left:155px;top:141px;width:1px;height:24px;background:#e5e5e5"></div>
<div style="left:156px;top:165px;width:1px;height:607px;background:#ececec"></div>
<div style="left:330px;top:141px;width:1px;height:24px;background:#e5e5e5"></div>
<div style="left:331px;top:165px;width:1px;height:607px;background:#ececec"></div>
<div style="left:442px;top:141px;width:1px;height:24px;background:#e5e5e5"></div>
<div style="left:443px;top:165px;width:1px;height:607px;background:#ececec"></div>
<div style="left:554px;top:141px;width:1px;height:24px;background:#e5e5e5"></div>
<div style="left:555px;top:165px;width:1px;height:607px;background:#ececec"></div>
<svg class="a" style="left:5px;top:167px" width="16" height="15" viewBox="0 0 16 15"><use href="#i-pc" x="0" y="0" width="16" height="15"/></svg>
<span class="t" style="left:23.6px;top:167.6px;font-size:13px;line-height:13px;letter-spacing:0.1px;text-shadow:0 0 0.4px #000">..</span>
<svg class="a" style="left:4px;top:182px" width="17" height="18" viewBox="0 0 17 18"><use href="#i-drvc" x="0.3" y="0.5" width="16" height="17"/></svg>
<span class="t" style="left:23.2px;top:187.03px;font-size:12px;line-height:12px;letter-spacing:-0.269px">C: Disco locale</span>
<svg class="a" style="left:4px;top:200px" width="17" height="18" viewBox="0 0 17 18"><use href="#i-drv" x="0.3" y="0.5" width="16" height="17"/></svg>
<span class="t" style="left:23.2px;top:205.03px;font-size:12px;line-height:12px;letter-spacing:-0.001px">D: Partizione Storage</span>
<svg class="a" style="left:4px;top:218px" width="17" height="18" viewBox="0 0 17 18"><use href="#i-drv" x="0.3" y="0.5" width="16" height="17"/></svg>
<span class="t" style="left:23.2px;top:223.03px;font-size:12px;line-height:12px;letter-spacing:0.085px">E: Partizione Temp</span>
<svg class="a" style="left:4px;top:236px" width="17" height="18" viewBox="0 0 17 18"><use href="#i-drv" x="0.3" y="0.5" width="16" height="17"/></svg>
<span class="t" style="left:23.2px;top:241.03px;font-size:12px;line-height:12px;letter-spacing:-0.103px">F: Partizione Programmi</span>
<svg class="a" style="left:4px;top:254px" width="17" height="18" viewBox="0 0 17 18"><use href="#i-drv" x="0.3" y="0.5" width="16" height="17"/></svg>
<span class="t" style="left:23.2px;top:259.03px;font-size:12px;line-height:12px;letter-spacing:-0.134px">G: Partizione Backup</span>
<svg class="a" style="left:4px;top:272px" width="17" height="18" viewBox="0 0 17 18"><use href="#i-drvcd" x="0.3" y="0.5" width="16" height="17"/></svg>
<span class="t" style="left:23.2px;top:277.03px;font-size:12px;line-height:12px;letter-spacing:-0.075px">H: Unità DVD RW</span>
<svg class="a" style="left:4px;top:290px" width="17" height="18" viewBox="0 0 17 18"><use href="#i-drvcd" x="0.3" y="0.5" width="16" height="17"/></svg>
<span class="t" style="left:23.2px;top:295.03px;font-size:12px;line-height:12px;letter-spacing:-0.191px">I: Unità BD-RE</span>
<svg class="a" style="left:5px;top:312px" width="16" height="12" viewBox="0 0 16 12"><use href="#i-desk" x="0" y="0" width="16" height="12"/></svg>
<span class="t" style="left:23.2px;top:313.03px;font-size:12px;line-height:12px;letter-spacing:-0.002px">Desktop</span>
<svg class="a" style="left:5px;top:328px" width="16" height="16" viewBox="0 0 16 16"><use href="#i-docs" x="0" y="0" width="16" height="16"/></svg>
<span class="t" style="left:23.2px;top:331.03px;font-size:12px;line-height:12px;letter-spacing:0.149px">Documenti</span>
<svg class="a" style="left:5px;top:346px" width="16" height="16" viewBox="0 0 16 16"><use href="#i-down" x="0" y="0" width="16" height="16"/></svg>
<span class="t" style="left:23.2px;top:349.03px;font-size:12px;line-height:12px;letter-spacing:-0.047px">Download</span>
<svg class="a" style="left:5px;top:364px" width="16" height="16" viewBox="0 0 16 16"><use href="#i-pics" x="0" y="0" width="16" height="16"/></svg>
<span class="t" style="left:23.2px;top:367.03px;font-size:12px;line-height:12px;letter-spacing:-0.086px">Immagini</span>
<svg class="a" style="left:5px;top:382px" width="16" height="16" viewBox="0 0 16 16"><use href="#i-music" x="0" y="0" width="16" height="16"/></svg>
<span class="t" style="left:23.2px;top:385.03px;font-size:12px;line-height:12px;letter-spacing:-0.669px">Musica</span>
<svg class="a" style="left:5px;top:400px" width="16" height="16" viewBox="0 0 16 16"><use href="#i-obj3d" x="0" y="0" width="16" height="16"/></svg>
<span class="t" style="left:23.2px;top:403.03px;font-size:12px;line-height:12px;letter-spacing:0.266px">Oggetti 3D</span>
<svg class="a" style="left:5px;top:418px" width="16" height="16" viewBox="0 0 16 16"><use href="#i-video" x="0" y="0" width="16" height="16"/></svg>
<span class="t" style="left:23.2px;top:421.03px;font-size:12px;line-height:12px;letter-spacing:-0.094px">Video</span>
<div style="left:1px;top:772px;width:796px;height:22px;background:#f0f0f0;border-top:1px solid #d0d0d0;box-sizing:border-box"></div>
<span class="t" style="left:5.5px;top:776.53px;font-size:12px;line-height:12px;letter-spacing:0.3px">0/14</span>
<span class="t" style="left:35.5px;top:776.53px;font-size:12px;line-height:12px;letter-spacing:0.4px">Oggetto</span>
<span class="t" style="left:86px;top:776.53px;font-size:12px;line-height:12px;letter-spacing:-0.1px">selezionato</span>
<span class="t" style="left:156.5px;top:776.53px;font-size:12px;line-height:12px;">0 Byte</span>
<div style="left:716px;top:773px;width:60px;height:20px;background:#fff;border:1px solid #7a7a7a;box-sizing:border-box"></div>
<div style="left:758px;top:774px;width:16px;height:18px;background:#f0f0f0"></div>
<svg class="a" style="left:762px;top:781px" width="8" height="5" viewBox="0 0 8 5"><use href="#i-dd" x="0.5" y="0" width="7.5" height="4.2"/></svg>
<svg class="a" style="left:778px;top:775px" width="18" height="16" viewBox="0 0 18 16"><use href="#i-filter" x="0" y="0" width="18" height="16"/></svg>
<div style="left:846px;top:72px;width:1px;height:722px;background:#a9a9a9"></div>
<div style="left:847px;top:72px;width:752px;height:24px;background:linear-gradient(#ffffff,#f6f6f6 45%,#e9e9e9)"></div>
<svg class="a" style="left:850px;top:72px" width="17" height="18" viewBox="0 0 17 18"><use href="#i-drvc" x="0.5" y="0.4" width="16" height="17"/></svg>
<span class="t" style="left:871px;top:77.03px;font-size:12px;line-height:12px;">C</span>
<svg class="a" style="left:888px;top:72px" width="17" height="18" viewBox="0 0 17 18"><use href="#i-drv" x="0.5" y="0.4" width="16" height="17"/></svg>
<span class="t" style="left:908px;top:77.03px;font-size:12px;line-height:12px;">D</span>
<svg class="a" style="left:925px;top:72px" width="17" height="18" viewBox="0 0 17 18"><use href="#i-drv" x="0.5" y="0.4" width="16" height="17"/></svg>
<span class="t" style="left:945.5px;top:77.03px;font-size:12px;line-height:12px;">E</span>
<svg class="a" style="left:962px;top:72px" width="17" height="18" viewBox="0 0 17 18"><use href="#i-drv" x="0.5" y="0.4" width="16" height="17"/></svg>
<span class="t" style="left:982.5px;top:77.03px;font-size:12px;line-height:12px;">F</span>
<svg class="a" style="left:999px;top:72px" width="17" height="18" viewBox="0 0 17 18"><use href="#i-drv" x="0.5" y="0.4" width="16" height="17"/></svg>
<span class="t" style="left:1018.5px;top:77.03px;font-size:12px;line-height:12px;">G</span>
<svg class="a" style="left:1035px;top:72px" width="17" height="18" viewBox="0 0 17 18"><use href="#i-drvcd" x="0.5" y="0.4" width="16" height="17"/></svg>
<span class="t" style="left:1056.5px;top:77.03px;font-size:12px;line-height:12px;">H</span>
<svg class="a" style="left:1073px;top:72px" width="16" height="18" viewBox="0 0 16 18"><use href="#i-drvcd" x="0" y="0.4" width="16" height="17"/></svg>
<span class="t" style="left:1093.5px;top:77.03px;font-size:12px;line-height:12px;">I</span>
<div style="left:1106px;top:72px;width:37px;height:21px;background:linear-gradient(#9cc6f0,#cfe4f8);border:1px solid #1a7ad8;box-sizing:border-box"></div>
<svg class="a" style="left:1110px;top:76px" width="16" height="12" viewBox="0 0 16 12"><use href="#i-desk" x="0" y="0" width="16" height="12"/></svg>
<span class="t" style="left:1130px;top:77.03px;font-size:12px;line-height:12px;">0</span>
<svg class="a" style="left:1146px;top:74px" width="18" height="16" viewBox="0 0 18 16"><use href="#i-net1" x="0.5" y="0" width="17" height="16"/></svg>
<span class="t" style="left:1167px;top:77.03px;font-size:12px;line-height:12px;">1</span>
<svg class="a" style="left:1183px;top:74px" width="18" height="16" viewBox="0 0 18 16"><use href="#i-net2" x="0.5" y="0" width="17" height="16"/></svg>
<span class="t" style="left:1204px;top:77.03px;font-size:12px;line-height:12px;">2</span>
<div style="left:847px;top:96px;width:752px;height:23px;background:#fff"></div>
<div style="left:847px;top:97px;width:105px;height:22px;background:linear-gradient(#b0c4dc,#ccd8e6 45%,#eceef2);border:1px solid #9a9a9a;border-bottom:none;border-top:3px solid #0f6fce;border-radius:3px 3px 0 0;box-sizing:border-box"></div>
<span class="b" style="left:853px;top:102.500px;font-size:12px;line-height:12px;letter-spacing:0.243px">::Questo PC</span>
<svg class="a" style="left:937px;top:104px" width="9" height="9" viewBox="0 0 9 9"><use href="#i-xtab" x="0" y="0" width="9" height="9"/></svg>
<div style="left:1561px;top:99px;width:18px;height:18px;background:linear-gradient(#f4f4f4,#dcdcdc);border:1px solid #c2c2c2;box-sizing:border-box"></div>
<div style="left:1581px;top:99px;width:18px;height:18px;background:linear-gradient(#f4f4f4,#dcdcdc);border:1px solid #c2c2c2;box-sizing:border-box"></div>
<svg class="a" style="left:1566px;top:106px" width="8" height="5" viewBox="0 0 8 5"><use href="#i-dd" x="0" y="0" width="8" height="4.5"/></svg>
<svg class="a" style="left:1585px;top:104px" width="11" height="8" viewBox="0 0 11 8"><use href="#i-xbtn" x="0.3" y="0.5" width="10" height="7"/></svg>
<div style="left:847px;top:119px;width:752px;height:22px;background:linear-gradient(#94afd2,#a9c0de 50%,#bccfe8)"></div>
<svg class="a" style="left:851px;top:124px" width="16" height="12" viewBox="0 0 16 12"><use href="#i-desk" x="0" y="0" width="16" height="12"/></svg>
<span class="t" style="left:873px;top:125.03px;font-size:12px;line-height:12px;letter-spacing:-0.100px">Questo PC</span>
<svg class="a" style="left:1476px;top:123px" width="18" height="16" viewBox="0 0 18 16"><use href="#i-fhist" x="0" y="0" width="18" height="16"/></svg>
<svg class="a" style="left:1497px;top:122px" width="21" height="18" viewBox="0 0 21 18"><use href="#i-ffav" x="0" y="0" width="21" height="18"/></svg>
<svg class="a" style="left:1520px;top:123px" width="18" height="16" viewBox="0 0 18 16"><use href="#i-fup" x="0" y="0" width="18" height="16"/></svg>
<svg class="a" style="left:1542px;top:123px" width="18" height="16" viewBox="0 0 18 16"><use href="#i-froot" x="0" y="0" width="18" height="16"/></svg>
<svg class="a" style="left:1564px;top:121px" width="18" height="18" viewBox="0 0 18 18"><use href="#i-fcopy2" x="0" y="0" width="18" height="18"/></svg>
<svg class="a" style="left:1589px;top:130px" width="7" height="4" viewBox="0 0 7 4"><use href="#i-dd" x="0.5" y="0" width="6.5" height="3.6"/></svg>
<div style="left:847px;top:141px;width:752px;height:631px;background:#fff"></div>
<span class="t" style="left:853px;top:148.03px;font-size:12px;line-height:12px;">Nome</span>
<span class="t" style="left:1009px;top:148.03px;font-size:12px;line-height:12px;letter-spacing:-0.100px">Tipo</span>
<span class="t" style="right:316.673px;top:148.03px;font-size:12px;line-height:12px;letter-spacing:0.027px">Dimensioni totali</span>
<span class="t" style="left:1302.5px;top:148.03px;font-size:12px;line-height:12px;letter-spacing:-0.263px">Spazio disponibile</span>
<div style="left:847px;top:165px;width:752px;height:607px;background:repeating-linear-gradient(to bottom,transparent 0,transparent 17px,#ececec 17px,#ececec 18px)"></div>
<div style="left:1001px;top:141px;width:1px;height:24px;background:#e5e5e5"></div>
<div style="left:1002px;top:165px;width:1px;height:607px;background:#ececec"></div>
<div style="left:1176px;top:141px;width:1px;height:24px;background:#e5e5e5"></div>
<div style="left:1177px;top:165px;width:1px;height:607px;background:#ececec"></div>
<div style="left:1288px;top:141px;width:1px;height:24px;background:#e5e5e5"></div>
<div style="left:1289px;top:165px;width:1px;height:607px;background:#ececec"></div>
<div style="left:1400px;top:141px;width:1px;height:24px;background:#e5e5e5"></div>
<div style="left:1401px;top:165px;width:1px;height:607px;background:#ececec"></div>
<svg class="a" style="left:851px;top:167px" width="16" height="15" viewBox="0 0 16 15"><use href="#i-pc" x="0" y="0" width="16" height="15"/></svg>
<span class="t" style="left:869.6px;top:167.6px;font-size:13px;line-height:13px;letter-spacing:0.1px;text-shadow:0 0 0.4px #000">..</span>
<span class="t" style="right:318.7650000000001px;top:169.03px;font-size:12px;line-height:12px;letter-spacing:-0.065px">System Folder</span>
<svg class="a" style="left:850px;top:182px" width="17" height="18" viewBox="0 0 17 18"><use href="#i-drvc" x="0.3" y="0.5" width="16" height="17"/></svg>
<span class="t" style="left:869.2px;top:187.03px;font-size:12px;line-height:12px;letter-spacing:-0.269px">C: Disco locale</span>
<span class="t" style="left:1008px;top:187.03px;font-size:12px;line-height:12px;letter-spacing:-0.284px">Disco locale</span>
<span class="t" style="right:318.72900000000004px;top:187.03px;font-size:12px;line-height:12px;letter-spacing:-0.029px">465 GB</span>
<span class="t" style="right:207.11200000000008px;top:187.03px;font-size:12px;line-height:12px;letter-spacing:-0.112px">394 GB</span>
<svg class="a" style="left:850px;top:200px" width="17" height="18" viewBox="0 0 17 18"><use href="#i-drv" x="0.3" y="0.5" width="16" height="17"/></svg>
<span class="t" style="left:869.2px;top:205.03px;font-size:12px;line-height:12px;letter-spacing:-0.001px">D: Partizione Storage</span>
<span class="t" style="left:1008px;top:205.03px;font-size:12px;line-height:12px;letter-spacing:-0.284px">Disco locale</span>
<span class="t" style="right:318.38300000000004px;top:205.03px;font-size:12px;line-height:12px;letter-spacing:0.317px">2,72 TB</span>
<span class="t" style="right:206.683px;top:205.03px;font-size:12px;line-height:12px;letter-spacing:0.317px">1,82 TB</span>
<svg class="a" style="left:850px;top:218px" width="17" height="18" viewBox="0 0 17 18"><use href="#i-drv" x="0.3" y="0.5" width="16" height="17"/></svg>
<span class="t" style="left:869.2px;top:223.03px;font-size:12px;line-height:12px;letter-spacing:0.085px">E: Partizione Temp</span>
<span class="t" style="left:1008px;top:223.03px;font-size:12px;line-height:12px;letter-spacing:-0.284px">Disco locale</span>
<span class="t" style="right:318.72900000000004px;top:223.03px;font-size:12px;line-height:12px;letter-spacing:-0.029px">196 GB</span>
<span class="t" style="right:207.11200000000008px;top:223.03px;font-size:12px;line-height:12px;letter-spacing:-0.112px">124 GB</span>
<svg class="a" style="left:850px;top:236px" width="17" height="18" viewBox="0 0 17 18"><use href="#i-drv" x="0.3" y="0.5" width="16" height="17"/></svg>
<span class="t" style="left:869.2px;top:241.03px;font-size:12px;line-height:12px;letter-spacing:-0.103px">F: Partizione Programmi</span>
<span class="t" style="left:1008px;top:241.03px;font-size:12px;line-height:12px;letter-spacing:-0.284px">Disco locale</span>
<span class="t" style="right:318.72900000000004px;top:241.03px;font-size:12px;line-height:12px;letter-spacing:-0.029px">977 GB</span>
<span class="t" style="right:207.11200000000008px;top:241.03px;font-size:12px;line-height:12px;letter-spacing:-0.112px">951 GB</span>
<svg class="a" style="left:850px;top:254px" width="17" height="18" viewBox="0 0 17 18"><use href="#i-drv" x="0.3" y="0.5" width="16" height="17"/></svg>
<span class="t" style="left:869.2px;top:259.03px;font-size:12px;line-height:12px;letter-spacing:-0.134px">G: Partizione Backup</span>
<span class="t" style="left:1008px;top:259.03px;font-size:12px;line-height:12px;letter-spacing:-0.284px">Disco locale</span>
<span class="t" style="right:318.38300000000004px;top:259.03px;font-size:12px;line-height:12px;letter-spacing:0.317px">1,58 TB</span>
<span class="t" style="right:206.683px;top:259.03px;font-size:12px;line-height:12px;letter-spacing:0.317px">1,55 TB</span>
<svg class="a" style="left:850px;top:272px" width="17" height="18" viewBox="0 0 17 18"><use href="#i-drvcd" x="0.3" y="0.5" width="16" height="17"/></svg>
<span class="t" style="left:869.2px;top:277.03px;font-size:12px;line-height:12px;letter-spacing:-0.075px">H: Unità DVD RW</span>
<span class="t" style="left:1008px;top:277.03px;font-size:12px;line-height:12px;letter-spacing:-0.298px">Unità CD</span>
<span class="t" style="right:318.7650000000001px;top:277.03px;font-size:12px;line-height:12px;letter-spacing:-0.065px">System Folder</span>
<svg class="a" style="left:850px;top:290px" width="17" height="18" viewBox="0 0 17 18"><use href="#i-drvcd" x="0.3" y="0.5" width="16" height="17"/></svg>
<span class="t" style="left:869.2px;top:295.03px;font-size:12px;line-height:12px;letter-spacing:-0.191px">I: Unità BD-RE</span>
<span class="t" style="left:1008px;top:295.03px;font-size:12px;line-height:12px;letter-spacing:-0.298px">Unità CD</span>
<span class="t" style="right:318.7650000000001px;top:295.03px;font-size:12px;line-height:12px;letter-spacing:-0.065px">System Folder</span>
<svg class="a" style="left:851px;top:312px" width="16" height="12" viewBox="0 0 16 12"><use href="#i-desk" x="0" y="0" width="16" height="12"/></svg>
<span class="t" style="left:869.2px;top:313.03px;font-size:12px;line-height:12px;letter-spacing:-0.002px">Desktop</span>
<span class="t" style="left:1008px;top:313.03px;font-size:12px;line-height:12px;letter-spacing:-0.179px">Cartella di sistema</span>
<svg class="a" style="left:851px;top:328px" width="16" height="16" viewBox="0 0 16 16"><use href="#i-docs" x="0" y="0" width="16" height="16"/></svg>
<span class="t" style="left:869.2px;top:331.03px;font-size:12px;line-height:12px;letter-spacing:0.149px">Documenti</span>
<span class="t" style="left:1008px;top:331.03px;font-size:12px;line-height:12px;letter-spacing:-0.179px">Cartella di sistema</span>
<svg class="a" style="left:851px;top:346px" width="16" height="16" viewBox="0 0 16 16"><use href="#i-down" x="0" y="0" width="16" height="16"/></svg>
<span class="t" style="left:869.2px;top:349.03px;font-size:12px;line-height:12px;letter-spacing:-0.047px">Download</span>
<span class="t" style="left:1008px;top:349.03px;font-size:12px;line-height:12px;letter-spacing:-0.179px">Cartella di sistema</span>
<svg class="a" style="left:851px;top:364px" width="16" height="16" viewBox="0 0 16 16"><use href="#i-pics" x="0" y="0" width="16" height="16"/></svg>
<span class="t" style="left:869.2px;top:367.03px;font-size:12px;line-height:12px;letter-spacing:-0.086px">Immagini</span>
<span class="t" style="left:1008px;top:367.03px;font-size:12px;line-height:12px;letter-spacing:-0.179px">Cartella di sistema</span>
<svg class="a" style="left:851px;top:382px" width="16" height="16" viewBox="0 0 16 16"><use href="#i-music" x="0" y="0" width="16" height="16"/></svg>
<span class="t" style="left:869.2px;top:385.03px;font-size:12px;line-height:12px;letter-spacing:-0.669px">Musica</span>
<span class="t" style="left:1008px;top:385.03px;font-size:12px;line-height:12px;letter-spacing:-0.179px">Cartella di sistema</span>
<svg class="a" style="left:851px;top:400px" width="16" height="16" viewBox="0 0 16 16"><use href="#i-obj3d" x="0" y="0" width="16" height="16"/></svg>
<span class="t" style="left:869.2px;top:403.03px;font-size:12px;line-height:12px;letter-spacing:0.266px">Oggetti 3D</span>
<span class="t" style="left:1008px;top:403.03px;font-size:12px;line-height:12px;letter-spacing:-0.179px">Cartella di sistema</span>
<svg class="a" style="left:851px;top:418px" width="16" height="16" viewBox="0 0 16 16"><use href="#i-video" x="0" y="0" width="16" height="16"/></svg>
<span class="t" style="left:869.2px;top:421.03px;font-size:12px;line-height:12px;letter-spacing:-0.094px">Video</span>
<span class="t" style="left:1008px;top:421.03px;font-size:12px;line-height:12px;letter-spacing:-0.179px">Cartella di sistema</span>
<div style="left:847px;top:772px;width:752px;height:22px;background:#f0f0f0;border-top:1px solid #d0d0d0;box-sizing:border-box"></div>
<span class="t" style="left:851.5px;top:776.53px;font-size:12px;line-height:12px;letter-spacing:0.3px">0/14</span>
<span class="t" style="left:881.5px;top:776.53px;font-size:12px;line-height:12px;letter-spacing:0.4px">Oggetto</span>
<span class="t" style="left:932px;top:776.53px;font-size:12px;line-height:12px;letter-spacing:-0.1px">selezionato</span>
<span class="t" style="left:1002.5px;top:776.53px;font-size:12px;line-height:12px;">0 Byte</span>
<div style="left:1518px;top:773px;width:60px;height:20px;background:#fff;border:1px solid #7a7a7a;box-sizing:border-box"></div>
<div style="left:1560px;top:774px;width:16px;height:18px;background:#f0f0f0"></div>
<svg class="a" style="left:1564px;top:781px" width="8" height="5" viewBox="0 0 8 5"><use href="#i-dd" x="0.5" y="0" width="7.5" height="4.2"/></svg>
<svg class="a" style="left:1580px;top:775px" width="18" height="16" viewBox="0 0 18 16"><use href="#i-filter" x="0" y="0" width="18" height="16"/></svg>
<div style="left:797px;top:72px;width:1px;height:722px;background:#a9a9a9"></div>
<div style="left:798px;top:72px;width:8px;height:722px;background:linear-gradient(#fdfdfd,#e8e8e8)"></div>
<div style="left:806px;top:72px;width:1px;height:722px;background:#a9a9a9"></div>
<div style="left:807px;top:72px;width:39px;height:722px;background:linear-gradient(#fdfdfd,#e7e7e7)"></div>
<div style="left:846px;top:72px;width:1px;height:722px;background:#a9a9a9"></div>
<svg class="a" style="left:810px;top:126px" width="31" height="33" viewBox="0 0 31 33"><use href="#i-swap" x="0" y="0" width="31" height="33"/></svg>
<svg class="a" style="left:812px;top:227px" width="28" height="24" viewBox="0 0 28 24"><use href="#i-mfolder" x="0" y="0" width="28" height="24"/></svg>
<svg class="a" style="left:809px;top:316px" width="34" height="34" viewBox="0 0 34 34"><use href="#i-tools" x="0" y="0" width="34" height="34"/></svg>
<svg class="a" style="left:810px;top:412px" width="33" height="33" viewBox="0 0 33 33"><use href="#i-mcopy" x="0" y="0" width="33" height="33"/></svg>
<svg class="a" style="left:810px;top:507px" width="33" height="33" viewBox="0 0 33 33"><use href="#i-mmove" x="0" y="0" width="33" height="33"/></svg>
<svg class="a" style="left:812px;top:603px" width="27" height="31" viewBox="0 0 27 31"><use href="#i-mview" x="0" y="0" width="27" height="31"/></svg>
<svg class="a" style="left:812px;top:760px" width="27" height="29" viewBox="0 0 27 29"><use href="#i-bin" x="0" y="0" width="27" height="29"/></svg>
<div style="left:1599px;top:72px;width:1px;height:722px;background:#a9a9a9"></div>
<div style="left:0px;top:794px;width:1600px;height:23px;background:linear-gradient(#f9f9f9,#f0f0f0 50%,#e6e6e6)"></div>
<span class="t" style="right:1007.5px;top:800.03px;font-size:12px;line-height:12px;letter-spacing:0.2px">C:\</span>
<div style="left:596px;top:795px;width:1003px;height:22px;background:#fff;border:1px solid #d0d0d0;border-top-color:#7e7e7e;border-left-color:#7e7e7e;box-sizing:border-box"></div>
<svg class="a" style="left:1588px;top:805px" width="8" height="5"><path d="M0 0h7.500l-3.750 4.200z" fill="#000"/></svg>
<div style="left:0px;top:817px;width:1600px;height:1px;background:#c8c8c8"></div>
<div style="left:0px;top:818px;width:1600px;height:21px;background:linear-gradient(#fdfdfd,#f2f2f2 50%,#e6e6e6)"></div>
<svg class="a" style="left:67px;top:819px" width="18" height="21" viewBox="0 0 18 21"><use href="#i-tview" x="0" y="0" width="18" height="20.685"/></svg>
<span class="t" style="left:91px;top:822.53px;font-size:12px;line-height:12px;letter-spacing:-0.5px">F3 Visualizza</span>
<svg class="a" style="left:297px;top:819px" width="20" height="21" viewBox="0 0 20 21"><use href="#i-tedit" x="0.5" y="0" width="19" height="20.685"/></svg>
<span class="t" style="left:319px;top:822.53px;font-size:12px;line-height:12px;letter-spacing:0px">F4 Modifica</span>
<svg class="a" style="left:530px;top:819px" width="21" height="21" viewBox="0 0 21 21"><use href="#i-tcopy" x="0" y="0" width="21" height="20.685"/></svg>
<span class="t" style="left:554px;top:822.53px;font-size:12px;line-height:12px;letter-spacing:-0.4px">F5 Copia</span>
<svg class="a" style="left:755px;top:819px" width="21" height="21" viewBox="0 0 21 21"><use href="#i-tmove" x="0" y="0" width="21" height="20.685"/></svg>
<span class="t" style="left:779px;top:822.53px;font-size:12px;line-height:12px;letter-spacing:-0.5px">F6 Sposta</span>
<svg class="a" style="left:982px;top:819px" width="20" height="20" viewBox="0 0 20 20"><use href="#i-fnew" x="0" y="0" width="20" height="20"/></svg>
<span class="t" style="left:1006px;top:822.53px;font-size:12px;line-height:12px;letter-spacing:-0.1px">F7 Nuovo</span>
<svg class="a" style="left:1206px;top:820px" width="18" height="18" viewBox="0 0 18 18"><use href="#i-tdel" x="0.6" y="0.8" width="16.6" height="16.4"/></svg>
<span class="t" style="left:1229px;top:822.53px;font-size:12px;line-height:12px;letter-spacing:-0.2px">Del Elimina</span>
<svg class="a" style="left:1433px;top:819px" width="19" height="20" viewBox="0 0 19 20"><use href="#i-fexit" x="0" y="0" width="19" height="20"/></svg>
<span class="t" style="left:1458px;top:822.53px;font-size:12px;line-height:12px;letter-spacing:-0.3px">Alt+F4 Esci</span>
<div style="left:0px;top:839px;width:1600px;height:21px;background:linear-gradient(#fafafa,#efefef 50%,#e2e2e2)"></div>
<svg class="a" style="left:2px;top:841px" width="19" height="17" viewBox="0 0 19 17"><use href="#i-restore" x="0" y="0" width="19" height="17"/></svg>
<div style="left:1302px;top:840px;width:297px;height:20px;background:linear-gradient(#ffffff,#f4f4f4);border-left:1px solid #bdbdbd;border-top:1px solid #dcdcdc;box-sizing:border-box"></div>
<span class="t" style="left:1369.5px;width:160px;text-align:center;top:844.03px;font-size:12px;line-height:12px;color:#0f6fd0;letter-spacing:0.3px">0%</span>
<div style="left:0px;top:860px;width:1600px;height:40px;background:#0c1a22"></div>
<svg class="a" style="left:0;top:860px;pointer-events:none" width="1600" height="40"><filter id="nz" x="0" y="0" width="100%" height="100%"><feTurbulence type="fractalNoise" baseFrequency="0.9" numOctaves="2" seed="3"/><feColorMatrix type="matrix" values="0 0 0 0 0.55  0 0 0 0 0.7  0 0 0 0 0.75  0.9 0 0 0 -0.42"/></filter><rect width="1600" height="40" filter="url(#nz)" opacity="0.22"/></svg>
<svg class="a" style="left:14px;top:871px" width="20" height="21" viewBox="0 0 20 21"><use href="#i-tb_start" x="0" y="0" width="20" height="21"/></svg>
<svg class="a" style="left:63px;top:872px" width="18" height="16" viewBox="0 0 18 16"><use href="#i-tb_view" x="0" y="0" width="18" height="16"/></svg>
<svg class="a" style="left:112px;top:868px" width="23" height="23" viewBox="0 0 23 23"><use href="#i-tb_edge" x="0.5" y="0.5" width="22" height="22"/></svg>
<svg class="a" style="left:161px;top:869px" width="22" height="22" viewBox="0 0 22 22"><use href="#i-tb_chrome" x="0" y="0" width="22" height="22"/></svg>
<svg class="a" style="left:210px;top:868px" width="22" height="23" viewBox="0 0 22 23"><use href="#i-tb_opera" x="0" y="0" width="22" height="23"/></svg>
<svg class="a" style="left:258px;top:869px" width="24" height="22" viewBox="0 0 24 22"><use href="#i-tb_w" x="0" y="0.5" width="24" height="21"/></svg>
<svg class="a" style="left:307px;top:867px" width="24" height="25" viewBox="0 0 24 25"><use href="#i-tb_ff" x="0" y="0.5" width="24" height="24"/></svg>
<svg class="a" style="left:356px;top:868px" width="24" height="24" viewBox="0 0 24 24"><use href="#i-tb_tb" x="0" y="0" width="24" height="24"/></svg>
<svg class="a" style="left:405px;top:868px" width="24" height="24" viewBox="0 0 24 24"><use href="#i-tb_fz" x="0" y="0" width="24" height="24"/></svg>
<svg class="a" style="left:454px;top:868px" width="24" height="24" viewBox="0 0 24 24"><use href="#i-tb_lock" x="0" y="0" width="24" height="24"/></svg>
<svg class="a" style="left:504px;top:870px" width="23" height="20" viewBox="0 0 23 20"><use href="#i-tb_exp" x="0" y="0.5" width="23" height="19"/></svg>
<svg class="a" style="left:552px;top:867px" width="24" height="25" viewBox="0 0 24 25"><use href="#i-tb_store" x="0" y="0.5" width="24" height="24"/></svg>
<svg class="a" style="left:601px;top:869px" width="25" height="21" viewBox="0 0 25 21"><use href="#i-tb_mail" x="0" y="0" width="25" height="21"/></svg>
<svg class="a" style="left:650px;top:868px" width="25" height="23" viewBox="0 0 25 23"><use href="#i-tb_cc" x="0" y="0.5" width="25" height="22"/></svg>
<div style="left:687px;top:860px;width:48px;height:38px;background:#39444c"></div>
<div style="left:687px;top:898px;width:48px;height:2px;background:#76b9ed"></div>
<svg class="a" style="left:698px;top:867px" width="25" height="25" viewBox="0 0 25 25"><use href="#i-tb_fc" x="0.6" y="0.4" width="24" height="24"/></svg>
<svg class="a" style="left:748px;top:868px" width="24" height="24" viewBox="0 0 24 24"><use href="#i-tb_kp" x="0.2" y="0.2" width="23" height="23"/></svg>
<svg class="a" style="left:797px;top:867px" width="24" height="26" viewBox="0 0 24 26"><use href="#i-tb_64" x="0" y="0.7" width="24" height="25"/></svg>
<svg class="a" style="left:848px;top:868px" width="20" height="23" viewBox="0 0 20 23"><use href="#i-tb_vlc" x="0" y="0" width="20" height="23"/></svg>
<svg class="a" style="left:895px;top:868px" width="24" height="24" viewBox="0 0 24 24"><use href="#i-tb_disc" x="0" y="0" width="24" height="24"/></svg>
<svg class="a" style="left:943px;top:867px" width="25" height="25" viewBox="0 0 25 25"><use href="#i-tb_face" x="0.2" y="0.4" width="24" height="24"/></svg>
<svg class="a" style="left:993px;top:867px" width="24" height="24" viewBox="0 0 24 24"><use href="#i-tb_globe" x="0.5" y="0.5" width="23" height="23"/></svg>
<svg class="a" style="left:1042px;top:870px" width="25" height="18" viewBox="0 0 25 18"><use href="#i-tb_db" x="0" y="0" width="25" height="18"/></svg>
<svg class="a" style="left:1091px;top:867px" width="24" height="26" viewBox="0 0 24 26"><use href="#i-tb_a" x="0" y="0.6" width="24" height="25"/></svg>
<svg class="a" style="left:1140px;top:868px" width="24" height="23" viewBox="0 0 24 23"><use href="#i-tb_note" x="0.5" y="0.6" width="23" height="22"/></svg>
<svg class="a" style="left:1410px;top:875px" width="13" height="8" viewBox="0 0 13 8"><use href="#i-tr_up" x="0.5" y="0.8" width="12" height="7"/></svg>
<svg class="a" style="left:1433px;top:873px" width="17" height="15" viewBox="0 0 17 15"><use href="#i-tr_net" x="0" y="0.6" width="17" height="14"/></svg>
<svg class="a" style="left:1456px;top:873px" width="18" height="14" viewBox="0 0 18 14"><use href="#i-tr_vol" x="0.8" y="0" width="17" height="14"/></svg>
<span class="t" style="left:1432px;width:160px;text-align:center;top:864.73px;font-size:12px;line-height:12px;color:#fff;letter-spacing:-0.300px">12:08</span>
<span class="t" style="left:1432px;width:160px;text-align:center;top:882.03px;font-size:12px;line-height:12px;color:#fff;letter-spacing:-0.150px">08/11/2019</span>
<svg class="a" style="left:1559px;top:872px" width="17" height="16" viewBox="0 0 17 16"><use href="#i-tr_msg" x="0" y="0" width="17" height="16"/></svg>
<div style="left:1595px;top:860px;width:1px;height:40px;background:#59636b"></div>
</body></html>
